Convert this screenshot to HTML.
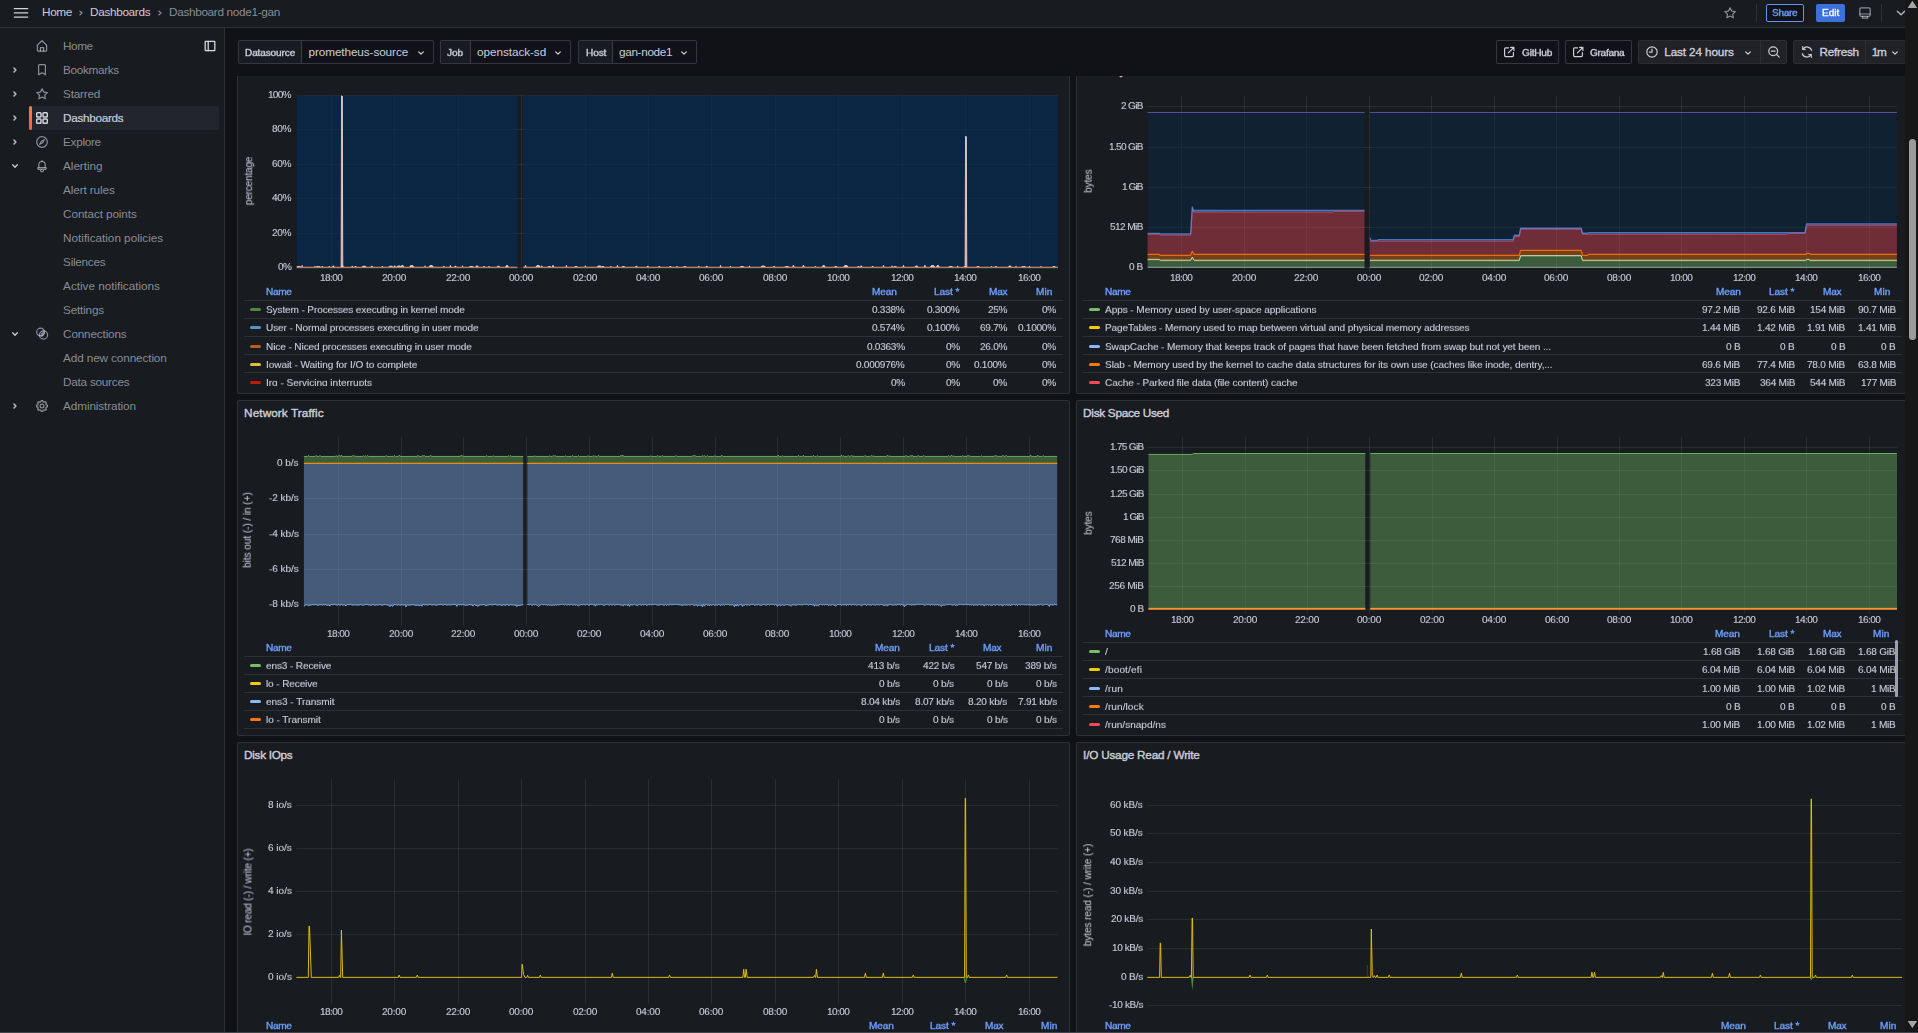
<!DOCTYPE html>
<html lang="en"><head><meta charset="utf-8"><title>Dashboard node1-gan - Dashboards - Grafana</title><style>
*{box-sizing:border-box}
html,body{margin:0;padding:0;background:#111217}
body{width:1918px;height:1033px;overflow:hidden;position:relative;font-family:"Liberation Sans",sans-serif;font-size:11.2px;color:#ccccdc}
.t{position:absolute;white-space:pre;line-height:1;font-family:"Liberation Sans",sans-serif}
.b{position:absolute}
.ic{position:absolute;overflow:visible}
.topbar{position:absolute;left:0;top:0;width:1918px;height:28px;background:#181b1f;border-bottom:1px solid rgba(204,204,220,0.12);z-index:5}
.side{position:absolute;left:0;top:28px;width:225px;height:1005px;background:#181b1f;border-right:1px solid rgba(204,204,220,0.12);z-index:4}
.toolbar{position:absolute;left:225px;top:28px;width:1693px;height:48px;background:#111217;z-index:3}
.grid{position:absolute;left:0;top:0;width:1918px;height:1033px;overflow:hidden}
.panel{position:absolute;background:#181b1f;border:1px solid rgba(204,204,220,0.12);border-radius:2px;overflow:hidden}
.panel>*{margin:-1px 0 0 -1px}
.plot{position:absolute;left:0;top:0}
.ax{position:absolute;left:0;top:0;width:0;height:0}
.lg{position:absolute;overflow:hidden}
.lg>*{margin:0}
.vscroll{position:absolute;left:1905px;top:0;width:15px;height:1033px;background:#171717;z-index:9;overflow:hidden}
.edge{position:absolute;left:0;top:1032px;width:1918px;height:1px;background:#41444b;z-index:10}
</style></head><body><main class="grid"><section class="panel" style="left:237px;top:58px;width:833px;height:336px"><span class="t" style="left:7.10px;top:7.30px;font-size:11.76px;color:#ccccdc;letter-spacing:-0.312px;-webkit-text-stroke:0.4px #ccccdc;">CPU Basic</span><svg class="plot" width="833" height="336" viewBox="0 0 833 336"><line x1="94.5" y1="37.4" x2="94.5" y2="213.3" stroke="rgba(240,250,255,0.08)" stroke-width="1"/><line x1="157.5" y1="37.4" x2="157.5" y2="213.3" stroke="rgba(240,250,255,0.08)" stroke-width="1"/><line x1="221.5" y1="37.4" x2="221.5" y2="213.3" stroke="rgba(240,250,255,0.08)" stroke-width="1"/><line x1="284.5" y1="37.4" x2="284.5" y2="213.3" stroke="rgba(240,250,255,0.08)" stroke-width="1"/><line x1="348.5" y1="37.4" x2="348.5" y2="213.3" stroke="rgba(240,250,255,0.08)" stroke-width="1"/><line x1="411.5" y1="37.4" x2="411.5" y2="213.3" stroke="rgba(240,250,255,0.08)" stroke-width="1"/><line x1="474.5" y1="37.4" x2="474.5" y2="213.3" stroke="rgba(240,250,255,0.08)" stroke-width="1"/><line x1="538.5" y1="37.4" x2="538.5" y2="213.3" stroke="rgba(240,250,255,0.08)" stroke-width="1"/><line x1="601.5" y1="37.4" x2="601.5" y2="213.3" stroke="rgba(240,250,255,0.08)" stroke-width="1"/><line x1="665.5" y1="37.4" x2="665.5" y2="213.3" stroke="rgba(240,250,255,0.08)" stroke-width="1"/><line x1="728.5" y1="37.4" x2="728.5" y2="213.3" stroke="rgba(240,250,255,0.08)" stroke-width="1"/><line x1="792.5" y1="37.4" x2="792.5" y2="213.3" stroke="rgba(240,250,255,0.08)" stroke-width="1"/><line x1="59.75" y1="37.5" x2="821" y2="37.5" stroke="rgba(240,250,255,0.08)" stroke-width="1"/><line x1="59.75" y1="71.5" x2="821" y2="71.5" stroke="rgba(240,250,255,0.08)" stroke-width="1"/><line x1="59.75" y1="106.5" x2="821" y2="106.5" stroke="rgba(240,250,255,0.08)" stroke-width="1"/><line x1="59.75" y1="140.5" x2="821" y2="140.5" stroke="rgba(240,250,255,0.08)" stroke-width="1"/><line x1="59.75" y1="175.5" x2="821" y2="175.5" stroke="rgba(240,250,255,0.08)" stroke-width="1"/><line x1="59.75" y1="209.5" x2="821" y2="209.5" stroke="rgba(240,250,255,0.08)" stroke-width="1"/><polygon points="59.75,37.4 280.5,37.4 280.5,210.2 59.75,210.2" fill="#052B51" fill-opacity="0.7"/><polyline points="59.75,210.05 280.5,210.05" fill="none" stroke="#508642" stroke-width="0.8" stroke-opacity="0.55" stroke-linejoin="round"/><polyline points="59.75,209.25 280.5,209.25" fill="none" stroke="#EE9275" stroke-width="1.2" stroke-opacity="1" stroke-linejoin="round"/><polygon points="59.12,208.9 60.68,207.9 62.76,207.9 64.32,208.9" fill="#FCE2DE" fill-opacity="0.85"/><polygon points="64.15,208.9 64.69,206.9 65.41,206.9 65.95,208.9" fill="#FCE2DE" fill-opacity="0.85"/><polygon points="64.35,209.8 65.05,208.4 65.75,209.8" fill="#E24D42" fill-opacity="0.85"/><polygon points="77.12,208.9 77.66,207.9 78.38,207.9 78.92,208.9" fill="#FCE2DE" fill-opacity="0.85"/><polygon points="77.32,209.8 78.02,208.4 78.72,209.8" fill="#508642" fill-opacity="0.85"/><polygon points="78.72,208.9 80.28,208.1 82.36,208.1 83.92,208.9" fill="#FCE2DE" fill-opacity="0.85"/><polygon points="80.62,209.8 81.32,208.4 82.02,209.8" fill="#E24D42" fill-opacity="0.85"/><polygon points="84.34,208.9 84.88,207.9 85.6,207.9 86.14,208.9" fill="#FCE2DE" fill-opacity="0.85"/><polygon points="91.4,208.9 91.94,207.9 92.66,207.9 93.2,208.9" fill="#FCE2DE" fill-opacity="0.85"/><polygon points="95.14,208.9 95.86,207.4 96.82,207.4 97.54,208.9" fill="#FCE2DE" fill-opacity="0.85"/><polygon points="104.2,208.9 104.92,206.9 105.88,206.9 106.6,208.9" fill="#FCE2DE" fill-opacity="0.85"/><polygon points="104.7,209.8 105.4,208.4 106.1,209.8" fill="#E24D42" fill-opacity="0.85"/><polygon points="114.35,208.9 114.89,207.7 115.61,207.7 116.15,208.9" fill="#FCE2DE" fill-opacity="0.85"/><polygon points="117.27,208.9 117.99,208.1 118.95,208.1 119.67,208.9" fill="#FCE2DE" fill-opacity="0.85"/><polygon points="124.49,208.9 126.05,207.7 128.13,207.7 129.69,208.9" fill="#FCE2DE" fill-opacity="0.85"/><polygon points="133.6,208.9 134.32,207.7 135.28,207.7 136,208.9" fill="#FCE2DE" fill-opacity="0.85"/><polygon points="144.44,208.9 144.98,207.9 145.7,207.9 146.24,208.9" fill="#FCE2DE" fill-opacity="0.85"/><polygon points="151.28,208.9 152.84,207.7 154.92,207.7 156.48,208.9" fill="#FCE2DE" fill-opacity="0.85"/><polygon points="153.18,209.8 153.88,208.4 154.58,209.8" fill="#E24D42" fill-opacity="0.85"/><polygon points="156.53,208.9 157.25,207.4 158.21,207.4 158.93,208.9" fill="#FCE2DE" fill-opacity="0.85"/><polygon points="159.38,208.9 160.94,207.4 163.02,207.4 164.58,208.9" fill="#FCE2DE" fill-opacity="0.85"/><polygon points="161.28,209.8 161.98,208.4 162.68,209.8" fill="#E24D42" fill-opacity="0.85"/><polygon points="163.57,208.9 164.65,206.9 166.09,206.9 167.17,208.9" fill="#FCE2DE" fill-opacity="0.85"/><polygon points="164.67,209.8 165.37,208.4 166.07,209.8" fill="#508642" fill-opacity="0.85"/><polygon points="172.11,208.9 173.67,206.9 175.75,206.9 177.31,208.9" fill="#FCE2DE" fill-opacity="0.85"/><polygon points="174.01,209.8 174.71,208.4 175.41,209.8" fill="#E24D42" fill-opacity="0.85"/><polygon points="187.17,208.9 187.71,207.4 188.43,207.4 188.97,208.9" fill="#FCE2DE" fill-opacity="0.85"/><polygon points="187.37,209.8 188.07,208.4 188.77,209.8" fill="#E24D42" fill-opacity="0.85"/><polygon points="191.53,208.9 193.09,206.9 195.17,206.9 196.73,208.9" fill="#FCE2DE" fill-opacity="0.85"/><polygon points="193.43,209.8 194.13,208.4 194.83,209.8" fill="#508642" fill-opacity="0.85"/><polygon points="205.93,208.9 206.47,207.7 207.19,207.7 207.73,208.9" fill="#FCE2DE" fill-opacity="0.85"/><polygon points="212.52,208.9 213.06,206.9 213.78,206.9 214.32,208.9" fill="#FCE2DE" fill-opacity="0.85"/><polygon points="217.23,208.9 217.95,207.7 218.91,207.7 219.63,208.9" fill="#FCE2DE" fill-opacity="0.85"/><polygon points="224.61,208.9 225.15,207.4 225.87,207.4 226.41,208.9" fill="#FCE2DE" fill-opacity="0.85"/><polygon points="224.81,209.8 225.51,208.4 226.21,209.8" fill="#508642" fill-opacity="0.85"/><polygon points="231.73,208.9 233.29,207.9 235.37,207.9 236.93,208.9" fill="#FCE2DE" fill-opacity="0.85"/><polygon points="238.23,208.9 239.31,207.4 240.75,207.4 241.83,208.9" fill="#FCE2DE" fill-opacity="0.85"/><polygon points="245.7,208.9 246.42,207.9 247.38,207.9 248.1,208.9" fill="#FCE2DE" fill-opacity="0.85"/><polygon points="246.2,209.8 246.9,208.4 247.6,209.8" fill="#E24D42" fill-opacity="0.85"/><polygon points="251.17,208.9 251.71,207.9 252.43,207.9 252.97,208.9" fill="#FCE2DE" fill-opacity="0.85"/><polygon points="259.55,208.9 260.63,207.7 262.07,207.7 263.15,208.9" fill="#FCE2DE" fill-opacity="0.85"/><polygon points="260.65,209.8 261.35,208.4 262.05,209.8" fill="#508642" fill-opacity="0.85"/><polygon points="268.19,208.9 269.27,206.9 270.71,206.9 271.79,208.9" fill="#FCE2DE" fill-opacity="0.85"/><polygon points="286,37.4 821,37.4 821,210.2 286,210.2" fill="#052B51" fill-opacity="0.7"/><polyline points="286,210.05 821,210.05" fill="none" stroke="#508642" stroke-width="0.8" stroke-opacity="0.55" stroke-linejoin="round"/><polyline points="286,209.25 821,209.25" fill="none" stroke="#EE9275" stroke-width="1.2" stroke-opacity="1" stroke-linejoin="round"/><polygon points="287.65,208.9 288.19,206.9 288.91,206.9 289.45,208.9" fill="#FCE2DE" fill-opacity="0.85"/><polygon points="298.46,208.9 300.02,206.9 302.1,206.9 303.66,208.9" fill="#FCE2DE" fill-opacity="0.85"/><polygon points="300.36,209.8 301.06,208.4 301.76,209.8" fill="#508642" fill-opacity="0.85"/><polygon points="303.85,208.9 304.39,207.4 305.11,207.4 305.65,208.9" fill="#FCE2DE" fill-opacity="0.85"/><polygon points="304.05,209.8 304.75,208.4 305.45,209.8" fill="#E24D42" fill-opacity="0.85"/><polygon points="310.52,208.9 311.6,208.1 313.04,208.1 314.12,208.9" fill="#FCE2DE" fill-opacity="0.85"/><polygon points="314.8,208.9 315.52,206.9 316.48,206.9 317.2,208.9" fill="#FCE2DE" fill-opacity="0.85"/><polygon points="328.51,208.9 329.05,206.9 329.77,206.9 330.31,208.9" fill="#FCE2DE" fill-opacity="0.85"/><polygon points="328.71,209.8 329.41,208.4 330.11,209.8" fill="#E24D42" fill-opacity="0.85"/><polygon points="337.17,208.9 338.25,207.9 339.69,207.9 340.77,208.9" fill="#FCE2DE" fill-opacity="0.85"/><polygon points="347.5,208.9 348.04,207.4 348.76,207.4 349.3,208.9" fill="#FCE2DE" fill-opacity="0.85"/><polygon points="347.7,209.8 348.4,208.4 349.1,209.8" fill="#508642" fill-opacity="0.85"/><polygon points="359.72,208.9 361.28,207.4 363.36,207.4 364.92,208.9" fill="#FCE2DE" fill-opacity="0.85"/><polygon points="364.01,208.9 365.09,208.1 366.53,208.1 367.61,208.9" fill="#FCE2DE" fill-opacity="0.85"/><polygon points="372.91,208.9 373.45,207.9 374.17,207.9 374.71,208.9" fill="#FCE2DE" fill-opacity="0.85"/><polygon points="373.11,209.8 373.81,208.4 374.51,209.8" fill="#E24D42" fill-opacity="0.85"/><polygon points="379.57,208.9 380.11,206.9 380.83,206.9 381.37,208.9" fill="#FCE2DE" fill-opacity="0.85"/><polygon points="384.6,208.9 385.68,208.1 387.12,208.1 388.2,208.9" fill="#FCE2DE" fill-opacity="0.85"/><polygon points="398.14,208.9 398.86,207.7 399.82,207.7 400.54,208.9" fill="#FCE2DE" fill-opacity="0.85"/><polygon points="409.6,208.9 410.32,207.7 411.28,207.7 412,208.9" fill="#FCE2DE" fill-opacity="0.85"/><polygon points="421.17,208.9 421.89,207.9 422.85,207.9 423.57,208.9" fill="#FCE2DE" fill-opacity="0.85"/><polygon points="432.18,208.9 432.9,207.9 433.86,207.9 434.58,208.9" fill="#FCE2DE" fill-opacity="0.85"/><polygon points="439.07,208.9 439.61,208.1 440.33,208.1 440.87,208.9" fill="#FCE2DE" fill-opacity="0.85"/><polygon points="446.1,208.9 447.18,207.9 448.62,207.9 449.7,208.9" fill="#FCE2DE" fill-opacity="0.85"/><polygon points="447.2,209.8 447.9,208.4 448.6,209.8" fill="#E24D42" fill-opacity="0.85"/><polygon points="460.86,208.9 461.4,207.7 462.12,207.7 462.66,208.9" fill="#FCE2DE" fill-opacity="0.85"/><polygon points="461.06,209.8 461.76,208.4 462.46,209.8" fill="#E24D42" fill-opacity="0.85"/><polygon points="468.47,208.9 469.19,207.7 470.15,207.7 470.87,208.9" fill="#FCE2DE" fill-opacity="0.85"/><polygon points="482.6,208.9 483.14,206.9 483.86,206.9 484.4,208.9" fill="#FCE2DE" fill-opacity="0.85"/><polygon points="492.61,208.9 493.15,208.1 493.87,208.1 494.41,208.9" fill="#FCE2DE" fill-opacity="0.85"/><polygon points="502.4,208.9 503.96,207.9 506.04,207.9 507.6,208.9" fill="#FCE2DE" fill-opacity="0.85"/><polygon points="511.59,208.9 512.13,207.7 512.85,207.7 513.39,208.9" fill="#FCE2DE" fill-opacity="0.85"/><polygon points="523.57,208.9 525.13,207.4 527.21,207.4 528.77,208.9" fill="#FCE2DE" fill-opacity="0.85"/><polygon points="525.47,209.8 526.17,208.4 526.87,209.8" fill="#E24D42" fill-opacity="0.85"/><polygon points="535.8,208.9 536.52,207.9 537.48,207.9 538.2,208.9" fill="#FCE2DE" fill-opacity="0.85"/><polygon points="536.3,209.8 537,208.4 537.7,209.8" fill="#E24D42" fill-opacity="0.85"/><polygon points="547.31,208.9 548.87,207.9 550.95,207.9 552.51,208.9" fill="#FCE2DE" fill-opacity="0.85"/><polygon points="555.24,208.9 555.96,206.9 556.92,206.9 557.64,208.9" fill="#FCE2DE" fill-opacity="0.85"/><polygon points="555.74,209.8 556.44,208.4 557.14,209.8" fill="#E24D42" fill-opacity="0.85"/><polygon points="565.21,208.9 565.93,206.9 566.89,206.9 567.61,208.9" fill="#FCE2DE" fill-opacity="0.85"/><polygon points="565.71,209.8 566.41,208.4 567.11,209.8" fill="#E24D42" fill-opacity="0.85"/><polygon points="577.51,208.9 578.05,207.9 578.77,207.9 579.31,208.9" fill="#FCE2DE" fill-opacity="0.85"/><polygon points="577.71,209.8 578.41,208.4 579.11,209.8" fill="#508642" fill-opacity="0.85"/><polygon points="584.87,208.9 585.95,206.9 587.39,206.9 588.47,208.9" fill="#FCE2DE" fill-opacity="0.85"/><polygon points="585.97,209.8 586.67,208.4 587.37,209.8" fill="#508642" fill-opacity="0.85"/><polygon points="596.97,208.9 598.05,208.1 599.49,208.1 600.57,208.9" fill="#FCE2DE" fill-opacity="0.85"/><polygon points="606.28,208.9 607.84,206.9 609.92,206.9 611.48,208.9" fill="#FCE2DE" fill-opacity="0.85"/><polygon points="620.28,208.9 621,207.9 621.96,207.9 622.68,208.9" fill="#FCE2DE" fill-opacity="0.85"/><polygon points="623,208.9 623.72,207.4 624.68,207.4 625.4,208.9" fill="#FCE2DE" fill-opacity="0.85"/><polygon points="634.42,208.9 635.14,207.9 636.1,207.9 636.82,208.9" fill="#FCE2DE" fill-opacity="0.85"/><polygon points="634.92,209.8 635.62,208.4 636.32,209.8" fill="#E24D42" fill-opacity="0.85"/><polygon points="645.56,208.9 646.1,206.9 646.82,206.9 647.36,208.9" fill="#FCE2DE" fill-opacity="0.85"/><polygon points="645.76,209.8 646.46,208.4 647.16,209.8" fill="#E24D42" fill-opacity="0.85"/><polygon points="654.17,208.9 654.71,207.4 655.43,207.4 655.97,208.9" fill="#FCE2DE" fill-opacity="0.85"/><polygon points="656.42,208.9 657.5,207.9 658.94,207.9 660.02,208.9" fill="#FCE2DE" fill-opacity="0.85"/><polygon points="657.52,209.8 658.22,208.4 658.92,209.8" fill="#E24D42" fill-opacity="0.85"/><polygon points="665.66,208.9 666.2,206.9 666.92,206.9 667.46,208.9" fill="#FCE2DE" fill-opacity="0.85"/><polygon points="677.75,208.9 678.83,207.4 680.27,207.4 681.35,208.9" fill="#FCE2DE" fill-opacity="0.85"/><polygon points="686.67,208.9 687.39,206.9 688.35,206.9 689.07,208.9" fill="#FCE2DE" fill-opacity="0.85"/><polygon points="692.97,208.9 694.53,206.9 696.61,206.9 698.17,208.9" fill="#FCE2DE" fill-opacity="0.85"/><polygon points="699.12,208.9 700.2,206.9 701.64,206.9 702.72,208.9" fill="#FCE2DE" fill-opacity="0.85"/><polygon points="711.08,208.9 712.64,207.9 714.72,207.9 716.28,208.9" fill="#FCE2DE" fill-opacity="0.85"/><polygon points="712.98,209.8 713.68,208.4 714.38,209.8" fill="#E24D42" fill-opacity="0.85"/><polygon points="719.8,208.9 720.34,207.7 721.06,207.7 721.6,208.9" fill="#FCE2DE" fill-opacity="0.85"/><polygon points="726.32,208.9 727.4,207.9 728.84,207.9 729.92,208.9" fill="#FCE2DE" fill-opacity="0.85"/><polygon points="739.14,208.9 740.22,207.9 741.66,207.9 742.74,208.9" fill="#FCE2DE" fill-opacity="0.85"/><polygon points="740.24,209.8 740.94,208.4 741.64,209.8" fill="#E24D42" fill-opacity="0.85"/><polygon points="753.66,208.9 754.2,207.9 754.92,207.9 755.46,208.9" fill="#FCE2DE" fill-opacity="0.85"/><polygon points="753.86,209.8 754.56,208.4 755.26,209.8" fill="#508642" fill-opacity="0.85"/><polygon points="757.74,208.9 758.46,207.9 759.42,207.9 760.14,208.9" fill="#FCE2DE" fill-opacity="0.85"/><polygon points="771.07,208.9 772.15,207.4 773.59,207.4 774.67,208.9" fill="#FCE2DE" fill-opacity="0.85"/><polygon points="772.17,209.8 772.87,208.4 773.57,209.8" fill="#508642" fill-opacity="0.85"/><polygon points="778.13,208.9 778.67,207.7 779.39,207.7 779.93,208.9" fill="#FCE2DE" fill-opacity="0.85"/><polygon points="778.33,209.8 779.03,208.4 779.73,209.8" fill="#508642" fill-opacity="0.85"/><polygon points="784,208.9 785.56,208.1 787.64,208.1 789.2,208.9" fill="#FCE2DE" fill-opacity="0.85"/><polygon points="785.9,209.8 786.6,208.4 787.3,209.8" fill="#E24D42" fill-opacity="0.85"/><polygon points="791.59,208.9 792.13,208.1 792.85,208.1 793.39,208.9" fill="#FCE2DE" fill-opacity="0.85"/><polygon points="803.16,208.9 803.7,208.1 804.42,208.1 804.96,208.9" fill="#FCE2DE" fill-opacity="0.85"/><polygon points="803.36,209.8 804.06,208.4 804.76,209.8" fill="#E24D42" fill-opacity="0.85"/><polygon points="815.18,208.9 816.26,207.9 817.7,207.9 818.78,208.9" fill="#FCE2DE" fill-opacity="0.85"/><polyline points="104,209.3 104.55,37.6 105,209.3" fill="none" stroke="#EA9A80" stroke-width="0.9" stroke-opacity="0.9" stroke-linejoin="round"/><polyline points="104.7,209 105.15,38.1 105.8,209" fill="none" stroke="#FCE2DE" stroke-width="0.9" stroke-opacity="0.9" stroke-linejoin="round"/><polyline points="728,209.3 728.55,78 729,209.3" fill="none" stroke="#EA9A80" stroke-width="0.9" stroke-opacity="0.9" stroke-linejoin="round"/><polyline points="728.7,209 729.15,78.5 729.8,209" fill="none" stroke="#FCE2DE" stroke-width="0.9" stroke-opacity="0.9" stroke-linejoin="round"/></svg><div class="ax"><span class="t" style="left:31.20px;top:31.73px;font-size:10.08px;color:#ccccdc;letter-spacing:-0.745px;will-change:transform;transform:scaleY(.875);transform-origin:0 8.27px;-webkit-text-stroke:0.12px #ccccdc;">100%</span><span class="t" style="left:35.00px;top:65.73px;font-size:10.08px;color:#ccccdc;letter-spacing:-0.391px;will-change:transform;transform:scaleY(.875);transform-origin:0 8.27px;-webkit-text-stroke:0.12px #ccccdc;">80%</span><span class="t" style="left:35.00px;top:100.73px;font-size:10.08px;color:#ccccdc;letter-spacing:-0.391px;will-change:transform;transform:scaleY(.875);transform-origin:0 8.27px;-webkit-text-stroke:0.12px #ccccdc;">60%</span><span class="t" style="left:35.00px;top:134.73px;font-size:10.08px;color:#ccccdc;letter-spacing:-0.391px;will-change:transform;transform:scaleY(.875);transform-origin:0 8.27px;-webkit-text-stroke:0.12px #ccccdc;">40%</span><span class="t" style="left:35.00px;top:169.73px;font-size:10.08px;color:#ccccdc;letter-spacing:-0.391px;will-change:transform;transform:scaleY(.875);transform-origin:0 8.27px;-webkit-text-stroke:0.12px #ccccdc;">20%</span><span class="t" style="left:40.60px;top:203.73px;font-size:10.08px;color:#ccccdc;letter-spacing:-0.589px;will-change:transform;transform:scaleY(.875);transform-origin:0 8.27px;-webkit-text-stroke:0.12px #ccccdc;">0%</span><span class="t" style="left:-12.35px;top:118.26px;font-size:10.08px;color:#ccccdc;transform:rotate(-90deg);transform-origin:50% 50%;will-change:transform;letter-spacing:-0.194px;">percentage</span><span class="t" style="left:82.90px;top:214.73px;font-size:10.08px;color:#ccccdc;letter-spacing:-0.567px;will-change:transform;transform:scaleY(.875);transform-origin:0 8.27px;-webkit-text-stroke:0.12px #ccccdc;">18:00</span><span class="t" style="left:145.10px;top:214.73px;font-size:10.08px;color:#ccccdc;letter-spacing:-0.247px;will-change:transform;transform:scaleY(.875);transform-origin:0 8.27px;-webkit-text-stroke:0.12px #ccccdc;">20:00</span><span class="t" style="left:209.10px;top:214.73px;font-size:10.08px;color:#ccccdc;letter-spacing:-0.247px;will-change:transform;transform:scaleY(.875);transform-origin:0 8.27px;-webkit-text-stroke:0.12px #ccccdc;">22:00</span><span class="t" style="left:272.10px;top:214.73px;font-size:10.08px;color:#ccccdc;letter-spacing:-0.247px;will-change:transform;transform:scaleY(.875);transform-origin:0 8.27px;-webkit-text-stroke:0.12px #ccccdc;">00:00</span><span class="t" style="left:336.10px;top:214.73px;font-size:10.08px;color:#ccccdc;letter-spacing:-0.247px;will-change:transform;transform:scaleY(.875);transform-origin:0 8.27px;-webkit-text-stroke:0.12px #ccccdc;">02:00</span><span class="t" style="left:399.10px;top:214.73px;font-size:10.08px;color:#ccccdc;letter-spacing:-0.247px;will-change:transform;transform:scaleY(.875);transform-origin:0 8.27px;-webkit-text-stroke:0.12px #ccccdc;">04:00</span><span class="t" style="left:462.10px;top:214.73px;font-size:10.08px;color:#ccccdc;letter-spacing:-0.247px;will-change:transform;transform:scaleY(.875);transform-origin:0 8.27px;-webkit-text-stroke:0.12px #ccccdc;">06:00</span><span class="t" style="left:526.10px;top:214.73px;font-size:10.08px;color:#ccccdc;letter-spacing:-0.247px;will-change:transform;transform:scaleY(.875);transform-origin:0 8.27px;-webkit-text-stroke:0.12px #ccccdc;">08:00</span><span class="t" style="left:589.90px;top:214.73px;font-size:10.08px;color:#ccccdc;letter-spacing:-0.567px;will-change:transform;transform:scaleY(.875);transform-origin:0 8.27px;-webkit-text-stroke:0.12px #ccccdc;">10:00</span><span class="t" style="left:653.90px;top:214.73px;font-size:10.08px;color:#ccccdc;letter-spacing:-0.567px;will-change:transform;transform:scaleY(.875);transform-origin:0 8.27px;-webkit-text-stroke:0.12px #ccccdc;">12:00</span><span class="t" style="left:716.90px;top:214.73px;font-size:10.08px;color:#ccccdc;letter-spacing:-0.567px;will-change:transform;transform:scaleY(.875);transform-origin:0 8.27px;-webkit-text-stroke:0.12px #ccccdc;">14:00</span><span class="t" style="left:780.90px;top:214.73px;font-size:10.08px;color:#ccccdc;letter-spacing:-0.567px;will-change:transform;transform:scaleY(.875);transform-origin:0 8.27px;-webkit-text-stroke:0.12px #ccccdc;">16:00</span></div><div class="lg" style="left:0;top:225px;width:833px;height:103.4px"><span class="t" style="left:29.40px;top:3.73px;font-size:10.08px;color:#6e9fff;letter-spacing:-0.323px;-webkit-text-stroke:0.4px #6e9fff;will-change:transform;transform:scaleY(.875);transform-origin:0 8.27px;">Name</span><span class="t" style="left:634.70px;top:3.73px;font-size:10.08px;color:#6e9fff;letter-spacing:-0.155px;-webkit-text-stroke:0.4px #6e9fff;will-change:transform;transform:scaleY(.875);transform-origin:0 8.27px;">Mean</span><span class="t" style="left:697.40px;top:3.73px;font-size:10.08px;color:#6e9fff;letter-spacing:-0.064px;-webkit-text-stroke:0.4px #6e9fff;will-change:transform;transform:scaleY(.875);transform-origin:0 8.27px;">Last *</span><span class="t" style="left:751.50px;top:3.73px;font-size:10.08px;color:#6e9fff;letter-spacing:-0.216px;-webkit-text-stroke:0.4px #6e9fff;will-change:transform;transform:scaleY(.875);transform-origin:0 8.27px;">Max</span><span class="t" style="left:798.60px;top:3.73px;font-size:10.08px;color:#6e9fff;letter-spacing:0.083px;-webkit-text-stroke:0.4px #6e9fff;will-change:transform;transform:scaleY(.875);transform-origin:0 8.27px;">Min</span><div class="b" style="left:7.00px;top:17.00px;width:819.00px;height:1.00px;background:rgba(204,204,220,0.12)"></div><div class="b" style="left:7.00px;top:35.00px;width:819.00px;height:1.00px;background:rgba(204,204,220,0.12)"></div><div class="b" style="left:7.00px;top:53.00px;width:819.00px;height:1.00px;background:rgba(204,204,220,0.12)"></div><div class="b" style="left:7.00px;top:71.00px;width:819.00px;height:1.00px;background:rgba(204,204,220,0.12)"></div><div class="b" style="left:7.00px;top:89.00px;width:819.00px;height:1.00px;background:rgba(204,204,220,0.12)"></div><div class="b" style="left:12.90px;top:24.60px;width:11.20px;height:3.30px;background:#508642;border-radius:1.6px"></div><span class="t" style="left:29.40px;top:21.73px;font-size:10.08px;color:#ccccdc;letter-spacing:-0.134px;will-change:transform;transform:scaleY(.875);transform-origin:0 8.27px;-webkit-text-stroke:0.12px #ccccdc;">System - Processes executing in kernel mode</span><span class="t" style="left:635.44px;top:21.73px;font-size:10.08px;color:#ccccdc;letter-spacing:-0.271px;will-change:transform;transform:scaleY(.875);transform-origin:0 8.27px;-webkit-text-stroke:0.12px #ccccdc;">0.338%</span><span class="t" style="left:690.24px;top:21.73px;font-size:10.08px;color:#ccccdc;letter-spacing:-0.271px;will-change:transform;transform:scaleY(.875);transform-origin:0 8.27px;-webkit-text-stroke:0.12px #ccccdc;">0.300%</span><span class="t" style="left:750.69px;top:21.73px;font-size:10.08px;color:#ccccdc;letter-spacing:-0.320px;will-change:transform;transform:scaleY(.875);transform-origin:0 8.27px;-webkit-text-stroke:0.12px #ccccdc;">25%</span><span class="t" style="left:805.22px;top:21.73px;font-size:10.08px;color:#ccccdc;letter-spacing:-0.347px;will-change:transform;transform:scaleY(.875);transform-origin:0 8.27px;-webkit-text-stroke:0.12px #ccccdc;">0%</span><div class="b" style="left:12.90px;top:42.60px;width:11.20px;height:3.30px;background:#5195CE;border-radius:1.6px"></div><span class="t" style="left:29.40px;top:39.73px;font-size:10.08px;color:#ccccdc;letter-spacing:-0.129px;will-change:transform;transform:scaleY(.875);transform-origin:0 8.27px;-webkit-text-stroke:0.12px #ccccdc;">User - Normal processes executing in user mode</span><span class="t" style="left:635.44px;top:39.73px;font-size:10.08px;color:#ccccdc;letter-spacing:-0.271px;will-change:transform;transform:scaleY(.875);transform-origin:0 8.27px;-webkit-text-stroke:0.12px #ccccdc;">0.574%</span><span class="t" style="left:690.24px;top:39.73px;font-size:10.08px;color:#ccccdc;letter-spacing:-0.271px;will-change:transform;transform:scaleY(.875);transform-origin:0 8.27px;-webkit-text-stroke:0.12px #ccccdc;">0.100%</span><span class="t" style="left:742.68px;top:39.73px;font-size:10.08px;color:#ccccdc;letter-spacing:-0.272px;will-change:transform;transform:scaleY(.875);transform-origin:0 8.27px;-webkit-text-stroke:0.12px #ccccdc;">69.7%</span><span class="t" style="left:781.20px;top:39.73px;font-size:10.08px;color:#ccccdc;letter-spacing:-0.271px;will-change:transform;transform:scaleY(.875);transform-origin:0 8.27px;-webkit-text-stroke:0.12px #ccccdc;">0.1000%</span><div class="b" style="left:12.90px;top:61.60px;width:11.20px;height:3.30px;background:#C15C17;border-radius:1.6px"></div><span class="t" style="left:29.40px;top:58.73px;font-size:10.08px;color:#ccccdc;letter-spacing:-0.109px;will-change:transform;transform:scaleY(.875);transform-origin:0 8.27px;-webkit-text-stroke:0.12px #ccccdc;">Nice - Niced processes executing in user mode</span><span class="t" style="left:630.10px;top:58.73px;font-size:10.08px;color:#ccccdc;letter-spacing:-0.271px;will-change:transform;transform:scaleY(.875);transform-origin:0 8.27px;-webkit-text-stroke:0.12px #ccccdc;">0.0363%</span><span class="t" style="left:708.92px;top:58.73px;font-size:10.08px;color:#ccccdc;letter-spacing:-0.347px;will-change:transform;transform:scaleY(.875);transform-origin:0 8.27px;-webkit-text-stroke:0.12px #ccccdc;">0%</span><span class="t" style="left:742.68px;top:58.73px;font-size:10.08px;color:#ccccdc;letter-spacing:-0.272px;will-change:transform;transform:scaleY(.875);transform-origin:0 8.27px;-webkit-text-stroke:0.12px #ccccdc;">26.0%</span><span class="t" style="left:805.22px;top:58.73px;font-size:10.08px;color:#ccccdc;letter-spacing:-0.347px;will-change:transform;transform:scaleY(.875);transform-origin:0 8.27px;-webkit-text-stroke:0.12px #ccccdc;">0%</span><div class="b" style="left:12.90px;top:79.60px;width:11.20px;height:3.30px;background:#EAB839;border-radius:1.6px"></div><span class="t" style="left:29.40px;top:76.73px;font-size:10.08px;color:#ccccdc;letter-spacing:-0.084px;will-change:transform;transform:scaleY(.875);transform-origin:0 8.27px;-webkit-text-stroke:0.12px #ccccdc;">Iowait - Waiting for I/O to complete</span><span class="t" style="left:619.43px;top:76.73px;font-size:10.08px;color:#ccccdc;letter-spacing:-0.270px;will-change:transform;transform:scaleY(.875);transform-origin:0 8.27px;-webkit-text-stroke:0.12px #ccccdc;">0.000976%</span><span class="t" style="left:708.92px;top:76.73px;font-size:10.08px;color:#ccccdc;letter-spacing:-0.347px;will-change:transform;transform:scaleY(.875);transform-origin:0 8.27px;-webkit-text-stroke:0.12px #ccccdc;">0%</span><span class="t" style="left:737.34px;top:76.73px;font-size:10.08px;color:#ccccdc;letter-spacing:-0.271px;will-change:transform;transform:scaleY(.875);transform-origin:0 8.27px;-webkit-text-stroke:0.12px #ccccdc;">0.100%</span><span class="t" style="left:805.22px;top:76.73px;font-size:10.08px;color:#ccccdc;letter-spacing:-0.347px;will-change:transform;transform:scaleY(.875);transform-origin:0 8.27px;-webkit-text-stroke:0.12px #ccccdc;">0%</span><div class="b" style="left:12.90px;top:97.60px;width:11.20px;height:3.30px;background:#BF1B00;border-radius:1.6px"></div><span class="t" style="left:29.40px;top:94.73px;font-size:10.08px;color:#ccccdc;letter-spacing:-0.038px;will-change:transform;transform:scaleY(.875);transform-origin:0 8.27px;-webkit-text-stroke:0.12px #ccccdc;">Irq - Servicing interrupts</span><span class="t" style="left:654.12px;top:94.73px;font-size:10.08px;color:#ccccdc;letter-spacing:-0.347px;will-change:transform;transform:scaleY(.875);transform-origin:0 8.27px;-webkit-text-stroke:0.12px #ccccdc;">0%</span><span class="t" style="left:708.92px;top:94.73px;font-size:10.08px;color:#ccccdc;letter-spacing:-0.347px;will-change:transform;transform:scaleY(.875);transform-origin:0 8.27px;-webkit-text-stroke:0.12px #ccccdc;">0%</span><span class="t" style="left:756.02px;top:94.73px;font-size:10.08px;color:#ccccdc;letter-spacing:-0.347px;will-change:transform;transform:scaleY(.875);transform-origin:0 8.27px;-webkit-text-stroke:0.12px #ccccdc;">0%</span><span class="t" style="left:805.22px;top:94.73px;font-size:10.08px;color:#ccccdc;letter-spacing:-0.347px;will-change:transform;transform:scaleY(.875);transform-origin:0 8.27px;-webkit-text-stroke:0.12px #ccccdc;">0%</span></div></section><section class="panel" style="left:1076px;top:58px;width:833px;height:336px"><span class="t" style="left:7.10px;top:7.30px;font-size:11.76px;color:#ccccdc;letter-spacing:-0.036px;-webkit-text-stroke:0.4px #ccccdc;">Memory Basic</span><svg class="plot" width="833" height="336" viewBox="0 0 833 336"><line x1="105.5" y1="37.4" x2="105.5" y2="213.3" stroke="rgba(240,250,255,0.08)" stroke-width="1"/><line x1="168.5" y1="37.4" x2="168.5" y2="213.3" stroke="rgba(240,250,255,0.08)" stroke-width="1"/><line x1="230.5" y1="37.4" x2="230.5" y2="213.3" stroke="rgba(240,250,255,0.08)" stroke-width="1"/><line x1="293.5" y1="37.4" x2="293.5" y2="213.3" stroke="rgba(240,250,255,0.08)" stroke-width="1"/><line x1="355.5" y1="37.4" x2="355.5" y2="213.3" stroke="rgba(240,250,255,0.08)" stroke-width="1"/><line x1="418.5" y1="37.4" x2="418.5" y2="213.3" stroke="rgba(240,250,255,0.08)" stroke-width="1"/><line x1="480.5" y1="37.4" x2="480.5" y2="213.3" stroke="rgba(240,250,255,0.08)" stroke-width="1"/><line x1="543.5" y1="37.4" x2="543.5" y2="213.3" stroke="rgba(240,250,255,0.08)" stroke-width="1"/><line x1="605.5" y1="37.4" x2="605.5" y2="213.3" stroke="rgba(240,250,255,0.08)" stroke-width="1"/><line x1="668.5" y1="37.4" x2="668.5" y2="213.3" stroke="rgba(240,250,255,0.08)" stroke-width="1"/><line x1="730.5" y1="37.4" x2="730.5" y2="213.3" stroke="rgba(240,250,255,0.08)" stroke-width="1"/><line x1="793.5" y1="37.4" x2="793.5" y2="213.3" stroke="rgba(240,250,255,0.08)" stroke-width="1"/><line x1="71.6" y1="48.5" x2="820.9" y2="48.5" stroke="rgba(240,250,255,0.08)" stroke-width="1"/><line x1="71.6" y1="89.5" x2="820.9" y2="89.5" stroke="rgba(240,250,255,0.08)" stroke-width="1"/><line x1="71.6" y1="129.5" x2="820.9" y2="129.5" stroke="rgba(240,250,255,0.08)" stroke-width="1"/><line x1="71.6" y1="169.5" x2="820.9" y2="169.5" stroke="rgba(240,250,255,0.08)" stroke-width="1"/><line x1="71.6" y1="209.5" x2="820.9" y2="209.5" stroke="rgba(240,250,255,0.08)" stroke-width="1"/><polygon points="71.6,54.5 288.5,54.5 288.5,152.4 117.4,152.5 116.3,149 114.6,175.9 84.2,175.9 83.2,175.3 71.6,175.3" fill="#052B51" fill-opacity="0.4"/><polygon points="71.6,175.3 83.2,175.3 84.2,175.9 114.6,175.9 116.3,149 117.4,152.5 288.5,152.4 288.5,153.5 258.2,153.5 257.2,154.3 117.7,154.3 116.4,150.6 114.7,177.25 84.2,177.25 83.2,176.4 71.6,176.4" fill="#5794F2" fill-opacity="0.4"/><polygon points="71.6,176.4 83.2,176.4 84.2,177.25 114.7,177.25 116.4,150.6 117.7,154.3 257.2,154.3 258.2,153.5 288.5,153.5 288.5,196.3 118,196.3 116.3,193.2 114.4,197.4 84.2,197.4 83.2,196.3 71.6,196.3" fill="#F2495C" fill-opacity="0.4"/><polygon points="71.6,196.3 83.2,196.3 84.2,197.4 114.4,197.4 116.3,193.2 118,196.3 288.5,196.3 288.5,202.25 118.2,202.25 116.3,199.1 114.6,202.2 84.2,202.2 83.2,201.3 71.6,201.3" fill="#FF780A" fill-opacity="0.4"/><polygon points="71.6,201.3 83.2,201.3 84.2,202.2 114.6,202.2 116.3,199.1 118.2,202.25 288.5,202.25 288.5,209.6 71.6,209.6" fill="#73BF69" fill-opacity="0.4"/><polyline points="71.6,209.3 288.5,209.3" fill="none" stroke="#9DB8C4" stroke-width="1.0" stroke-opacity="0.8" stroke-linejoin="round"/><polyline points="71.6,201.8 83.2,201.8 84.2,202.7 114.6,202.7 116.3,199.6 118.2,202.75 288.5,202.75" fill="none" stroke="#73BF69" stroke-width="0.8" stroke-opacity="0.7" stroke-linejoin="round"/><polyline points="71.6,201.3 83.2,201.3 84.2,202.2 114.6,202.2 116.3,199.1 118.2,202.25 288.5,202.25" fill="none" stroke="#DDD6BC" stroke-width="1.0" stroke-opacity="0.92" stroke-linejoin="round"/><polyline points="71.6,196.3 83.2,196.3 84.2,197.4 114.4,197.4 116.3,193.2 118,196.3 288.5,196.3" fill="none" stroke="#FF780A" stroke-width="1.2" stroke-opacity="0.85" stroke-linejoin="round"/><polyline points="71.6,176.4 83.2,176.4 84.2,177.25 114.7,177.25 116.4,150.6 117.7,154.3 257.2,154.3 258.2,153.5 288.5,153.5" fill="none" stroke="#F2495C" stroke-width="1.0" stroke-opacity="0.62" stroke-linejoin="round"/><polyline points="71.6,175.3 83.2,175.3 84.2,175.9 114.6,175.9 116.3,149 117.4,152.5 288.5,152.4" fill="none" stroke="#5794F2" stroke-width="1.3" stroke-opacity="0.72" stroke-linejoin="round"/><polyline points="71.6,54.5 288.5,54.5" fill="none" stroke="#5A4F96" stroke-width="1.0" stroke-opacity="1" stroke-linejoin="round"/><polygon points="294,54.5 820.9,54.5 820.9,165.9 730.5,165.9 729,174.7 512.3,174.7 511.3,175.25 506.5,175.25 505.2,170.25 444.6,170.25 443.3,177.25 438.4,177.25 436.9,181.7 302.2,181.7 301.2,182.4 294.8,182.4 294,179.6" fill="#052B51" fill-opacity="0.4"/><polygon points="294,179.6 294.8,182.4 301.2,182.4 302.2,181.7 436.9,181.7 438.4,177.25 443.3,177.25 444.6,170.25 505.2,170.25 506.5,175.25 511.3,175.25 512.3,174.7 729,174.7 730.5,165.9 820.9,165.9 820.9,167.6 730.6,167.6 729,175.5 712.3,175.5 711.3,176.5 506.5,176.4 505.2,171.4 444.6,171.4 443.3,178.5 438.4,178.5 436.9,183.4 294,183.4" fill="#5794F2" fill-opacity="0.4"/><polygon points="294,183.4 436.9,183.4 438.4,178.5 443.3,178.5 444.6,171.4 505.2,171.4 506.5,176.4 711.3,176.5 712.3,175.5 729,175.5 730.6,167.6 820.9,167.6 820.9,196.3 734.6,196.3 733.4,195.4 730.8,195.4 729.6,196.3 512.3,196.3 511.3,197.4 506.5,197.4 505.2,192.4 444.6,192.4 443.3,197.4 294,197.4" fill="#F2495C" fill-opacity="0.4"/><polygon points="294,197.4 443.3,197.4 444.6,192.4 505.2,192.4 506.5,197.4 511.3,197.4 512.3,196.3 729.6,196.3 730.8,195.4 733.4,195.4 734.6,196.3 820.9,196.3 820.9,202.25 734,202.25 732.8,201.3 730.8,201.3 729.6,202.25 506.5,202.25 505.2,197.6 444.6,197.6 443.3,202.25 294,202.25" fill="#FF780A" fill-opacity="0.4"/><polygon points="294,202.25 443.3,202.25 444.6,197.6 505.2,197.6 506.5,202.25 729.6,202.25 730.8,201.3 732.8,201.3 734,202.25 820.9,202.25 820.9,209.6 294,209.6" fill="#73BF69" fill-opacity="0.4"/><polyline points="294,209.3 820.9,209.3" fill="none" stroke="#9DB8C4" stroke-width="1.0" stroke-opacity="0.8" stroke-linejoin="round"/><polyline points="294,202.75 443.3,202.75 444.6,198.1 505.2,198.1 506.5,202.75 729.6,202.75 730.8,201.8 732.8,201.8 734,202.75 820.9,202.75" fill="none" stroke="#73BF69" stroke-width="0.8" stroke-opacity="0.7" stroke-linejoin="round"/><polyline points="294,202.25 443.3,202.25 444.6,197.6 505.2,197.6 506.5,202.25 729.6,202.25 730.8,201.3 732.8,201.3 734,202.25 820.9,202.25" fill="none" stroke="#DDD6BC" stroke-width="1.0" stroke-opacity="0.92" stroke-linejoin="round"/><polyline points="294,197.4 443.3,197.4 444.6,192.4 505.2,192.4 506.5,197.4 511.3,197.4 512.3,196.3 729.6,196.3 730.8,195.4 733.4,195.4 734.6,196.3 820.9,196.3" fill="none" stroke="#FF780A" stroke-width="1.2" stroke-opacity="0.85" stroke-linejoin="round"/><polyline points="294,183.4 436.9,183.4 438.4,178.5 443.3,178.5 444.6,171.4 505.2,171.4 506.5,176.4 711.3,176.5 712.3,175.5 729,175.5 730.6,167.6 820.9,167.6" fill="none" stroke="#F2495C" stroke-width="1.0" stroke-opacity="0.62" stroke-linejoin="round"/><polyline points="294,179.6 294.8,182.4 301.2,182.4 302.2,181.7 436.9,181.7 438.4,177.25 443.3,177.25 444.6,170.25 505.2,170.25 506.5,175.25 511.3,175.25 512.3,174.7 729,174.7 730.5,165.9 820.9,165.9" fill="none" stroke="#5794F2" stroke-width="1.3" stroke-opacity="0.72" stroke-linejoin="round"/><polyline points="294,54.5 820.9,54.5" fill="none" stroke="#5A4F96" stroke-width="1.0" stroke-opacity="1" stroke-linejoin="round"/></svg><div class="ax"><span class="t" style="left:44.80px;top:42.73px;font-size:10.08px;color:#ccccdc;letter-spacing:-0.684px;will-change:transform;transform:scaleY(.875);transform-origin:0 8.27px;-webkit-text-stroke:0.12px #ccccdc;">2 GiB</span><span class="t" style="left:32.80px;top:83.73px;font-size:10.08px;color:#ccccdc;letter-spacing:-0.677px;will-change:transform;transform:scaleY(.875);transform-origin:0 8.27px;-webkit-text-stroke:0.12px #ccccdc;">1.50 GiB</span><span class="t" style="left:46.00px;top:123.73px;font-size:10.08px;color:#ccccdc;letter-spacing:-0.924px;will-change:transform;transform:scaleY(.875);transform-origin:0 8.27px;-webkit-text-stroke:0.12px #ccccdc;">1 GiB</span><span class="t" style="left:33.80px;top:163.73px;font-size:10.08px;color:#ccccdc;letter-spacing:-0.598px;will-change:transform;transform:scaleY(.875);transform-origin:0 8.27px;-webkit-text-stroke:0.12px #ccccdc;">512 MiB</span><span class="t" style="left:53.00px;top:203.73px;font-size:10.08px;color:#ccccdc;letter-spacing:-0.514px;will-change:transform;transform:scaleY(.875);transform-origin:0 8.27px;-webkit-text-stroke:0.12px #ccccdc;">0 B</span><span class="t" style="left:0.85px;top:118.26px;font-size:10.08px;color:#ccccdc;transform:rotate(-90deg);transform-origin:50% 50%;will-change:transform;letter-spacing:-0.119px;">bytes</span><span class="t" style="left:93.90px;top:214.73px;font-size:10.08px;color:#ccccdc;letter-spacing:-0.567px;will-change:transform;transform:scaleY(.875);transform-origin:0 8.27px;-webkit-text-stroke:0.12px #ccccdc;">18:00</span><span class="t" style="left:156.10px;top:214.73px;font-size:10.08px;color:#ccccdc;letter-spacing:-0.247px;will-change:transform;transform:scaleY(.875);transform-origin:0 8.27px;-webkit-text-stroke:0.12px #ccccdc;">20:00</span><span class="t" style="left:218.10px;top:214.73px;font-size:10.08px;color:#ccccdc;letter-spacing:-0.247px;will-change:transform;transform:scaleY(.875);transform-origin:0 8.27px;-webkit-text-stroke:0.12px #ccccdc;">22:00</span><span class="t" style="left:281.10px;top:214.73px;font-size:10.08px;color:#ccccdc;letter-spacing:-0.247px;will-change:transform;transform:scaleY(.875);transform-origin:0 8.27px;-webkit-text-stroke:0.12px #ccccdc;">00:00</span><span class="t" style="left:343.10px;top:214.73px;font-size:10.08px;color:#ccccdc;letter-spacing:-0.247px;will-change:transform;transform:scaleY(.875);transform-origin:0 8.27px;-webkit-text-stroke:0.12px #ccccdc;">02:00</span><span class="t" style="left:406.10px;top:214.73px;font-size:10.08px;color:#ccccdc;letter-spacing:-0.247px;will-change:transform;transform:scaleY(.875);transform-origin:0 8.27px;-webkit-text-stroke:0.12px #ccccdc;">04:00</span><span class="t" style="left:468.10px;top:214.73px;font-size:10.08px;color:#ccccdc;letter-spacing:-0.247px;will-change:transform;transform:scaleY(.875);transform-origin:0 8.27px;-webkit-text-stroke:0.12px #ccccdc;">06:00</span><span class="t" style="left:531.10px;top:214.73px;font-size:10.08px;color:#ccccdc;letter-spacing:-0.247px;will-change:transform;transform:scaleY(.875);transform-origin:0 8.27px;-webkit-text-stroke:0.12px #ccccdc;">08:00</span><span class="t" style="left:593.90px;top:214.73px;font-size:10.08px;color:#ccccdc;letter-spacing:-0.567px;will-change:transform;transform:scaleY(.875);transform-origin:0 8.27px;-webkit-text-stroke:0.12px #ccccdc;">10:00</span><span class="t" style="left:656.90px;top:214.73px;font-size:10.08px;color:#ccccdc;letter-spacing:-0.567px;will-change:transform;transform:scaleY(.875);transform-origin:0 8.27px;-webkit-text-stroke:0.12px #ccccdc;">12:00</span><span class="t" style="left:718.90px;top:214.73px;font-size:10.08px;color:#ccccdc;letter-spacing:-0.567px;will-change:transform;transform:scaleY(.875);transform-origin:0 8.27px;-webkit-text-stroke:0.12px #ccccdc;">14:00</span><span class="t" style="left:781.90px;top:214.73px;font-size:10.08px;color:#ccccdc;letter-spacing:-0.567px;will-change:transform;transform:scaleY(.875);transform-origin:0 8.27px;-webkit-text-stroke:0.12px #ccccdc;">16:00</span></div><div class="lg" style="left:0;top:225px;width:833px;height:109.0px"><span class="t" style="left:29.40px;top:3.73px;font-size:10.08px;color:#6e9fff;letter-spacing:-0.323px;-webkit-text-stroke:0.4px #6e9fff;will-change:transform;transform:scaleY(.875);transform-origin:0 8.27px;">Name</span><span class="t" style="left:639.50px;top:3.73px;font-size:10.08px;color:#6e9fff;letter-spacing:-0.155px;-webkit-text-stroke:0.4px #6e9fff;will-change:transform;transform:scaleY(.875);transform-origin:0 8.27px;">Mean</span><span class="t" style="left:693.10px;top:3.73px;font-size:10.08px;color:#6e9fff;letter-spacing:-0.064px;-webkit-text-stroke:0.4px #6e9fff;will-change:transform;transform:scaleY(.875);transform-origin:0 8.27px;">Last *</span><span class="t" style="left:747.40px;top:3.73px;font-size:10.08px;color:#6e9fff;letter-spacing:-0.216px;-webkit-text-stroke:0.4px #6e9fff;will-change:transform;transform:scaleY(.875);transform-origin:0 8.27px;">Max</span><span class="t" style="left:797.60px;top:3.73px;font-size:10.08px;color:#6e9fff;letter-spacing:0.083px;-webkit-text-stroke:0.4px #6e9fff;will-change:transform;transform:scaleY(.875);transform-origin:0 8.27px;">Min</span><div class="b" style="left:7.00px;top:17.00px;width:819.00px;height:1.00px;background:rgba(204,204,220,0.12)"></div><div class="b" style="left:7.00px;top:35.00px;width:819.00px;height:1.00px;background:rgba(204,204,220,0.12)"></div><div class="b" style="left:7.00px;top:53.00px;width:819.00px;height:1.00px;background:rgba(204,204,220,0.12)"></div><div class="b" style="left:7.00px;top:71.00px;width:819.00px;height:1.00px;background:rgba(204,204,220,0.12)"></div><div class="b" style="left:7.00px;top:89.00px;width:819.00px;height:1.00px;background:rgba(204,204,220,0.12)"></div><div class="b" style="left:12.90px;top:24.60px;width:11.20px;height:3.30px;background:#73BF69;border-radius:1.6px"></div><span class="t" style="left:29.40px;top:21.73px;font-size:10.08px;color:#ccccdc;letter-spacing:-0.080px;will-change:transform;transform:scaleY(.875);transform-origin:0 8.27px;-webkit-text-stroke:0.12px #ccccdc;">Apps - Memory used by user-space applications</span><span class="t" style="left:626.31px;top:21.73px;font-size:10.08px;color:#ccccdc;letter-spacing:-0.237px;will-change:transform;transform:scaleY(.875);transform-origin:0 8.27px;-webkit-text-stroke:0.12px #ccccdc;">97.2 MiB</span><span class="t" style="left:681.01px;top:21.73px;font-size:10.08px;color:#ccccdc;letter-spacing:-0.237px;will-change:transform;transform:scaleY(.875);transform-origin:0 8.27px;-webkit-text-stroke:0.12px #ccccdc;">92.6 MiB</span><span class="t" style="left:733.78px;top:21.73px;font-size:10.08px;color:#ccccdc;letter-spacing:-0.252px;will-change:transform;transform:scaleY(.875);transform-origin:0 8.27px;-webkit-text-stroke:0.12px #ccccdc;">154 MiB</span><span class="t" style="left:781.91px;top:21.73px;font-size:10.08px;color:#ccccdc;letter-spacing:-0.237px;will-change:transform;transform:scaleY(.875);transform-origin:0 8.27px;-webkit-text-stroke:0.12px #ccccdc;">90.7 MiB</span><div class="b" style="left:12.90px;top:42.60px;width:11.20px;height:3.30px;background:#F2CC0C;border-radius:1.6px"></div><span class="t" style="left:29.40px;top:39.73px;font-size:10.08px;color:#ccccdc;letter-spacing:-0.126px;will-change:transform;transform:scaleY(.875);transform-origin:0 8.27px;-webkit-text-stroke:0.12px #ccccdc;">PageTables - Memory used to map between virtual and physical memory addresses</span><span class="t" style="left:626.31px;top:39.73px;font-size:10.08px;color:#ccccdc;letter-spacing:-0.237px;will-change:transform;transform:scaleY(.875);transform-origin:0 8.27px;-webkit-text-stroke:0.12px #ccccdc;">1.44 MiB</span><span class="t" style="left:681.01px;top:39.73px;font-size:10.08px;color:#ccccdc;letter-spacing:-0.237px;will-change:transform;transform:scaleY(.875);transform-origin:0 8.27px;-webkit-text-stroke:0.12px #ccccdc;">1.42 MiB</span><span class="t" style="left:731.11px;top:39.73px;font-size:10.08px;color:#ccccdc;letter-spacing:-0.237px;will-change:transform;transform:scaleY(.875);transform-origin:0 8.27px;-webkit-text-stroke:0.12px #ccccdc;">1.91 MiB</span><span class="t" style="left:781.91px;top:39.73px;font-size:10.08px;color:#ccccdc;letter-spacing:-0.237px;will-change:transform;transform:scaleY(.875);transform-origin:0 8.27px;-webkit-text-stroke:0.12px #ccccdc;">1.41 MiB</span><div class="b" style="left:12.90px;top:61.60px;width:11.20px;height:3.30px;background:#8AB8FF;border-radius:1.6px"></div><span class="t" style="left:29.40px;top:58.73px;font-size:10.08px;color:#ccccdc;letter-spacing:-0.102px;will-change:transform;transform:scaleY(.875);transform-origin:0 8.27px;-webkit-text-stroke:0.12px #ccccdc;">SwapCache - Memory that keeps track of pages that have been fetched from swap but not yet been ...</span><span class="t" style="left:649.78px;top:58.73px;font-size:10.08px;color:#ccccdc;letter-spacing:-0.240px;will-change:transform;transform:scaleY(.875);transform-origin:0 8.27px;-webkit-text-stroke:0.12px #ccccdc;">0 B</span><span class="t" style="left:704.48px;top:58.73px;font-size:10.08px;color:#ccccdc;letter-spacing:-0.240px;will-change:transform;transform:scaleY(.875);transform-origin:0 8.27px;-webkit-text-stroke:0.12px #ccccdc;">0 B</span><span class="t" style="left:754.58px;top:58.73px;font-size:10.08px;color:#ccccdc;letter-spacing:-0.240px;will-change:transform;transform:scaleY(.875);transform-origin:0 8.27px;-webkit-text-stroke:0.12px #ccccdc;">0 B</span><span class="t" style="left:805.38px;top:58.73px;font-size:10.08px;color:#ccccdc;letter-spacing:-0.240px;will-change:transform;transform:scaleY(.875);transform-origin:0 8.27px;-webkit-text-stroke:0.12px #ccccdc;">0 B</span><div class="b" style="left:12.90px;top:79.60px;width:11.20px;height:3.30px;background:#FF780A;border-radius:1.6px"></div><span class="t" style="left:29.40px;top:76.73px;font-size:10.08px;color:#ccccdc;letter-spacing:-0.085px;will-change:transform;transform:scaleY(.875);transform-origin:0 8.27px;-webkit-text-stroke:0.12px #ccccdc;">Slab - Memory used by the kernel to cache data structures for its own use (caches like inode, dentry,...</span><span class="t" style="left:626.31px;top:76.73px;font-size:10.08px;color:#ccccdc;letter-spacing:-0.237px;will-change:transform;transform:scaleY(.875);transform-origin:0 8.27px;-webkit-text-stroke:0.12px #ccccdc;">69.6 MiB</span><span class="t" style="left:681.01px;top:76.73px;font-size:10.08px;color:#ccccdc;letter-spacing:-0.237px;will-change:transform;transform:scaleY(.875);transform-origin:0 8.27px;-webkit-text-stroke:0.12px #ccccdc;">77.4 MiB</span><span class="t" style="left:731.11px;top:76.73px;font-size:10.08px;color:#ccccdc;letter-spacing:-0.237px;will-change:transform;transform:scaleY(.875);transform-origin:0 8.27px;-webkit-text-stroke:0.12px #ccccdc;">78.0 MiB</span><span class="t" style="left:781.91px;top:76.73px;font-size:10.08px;color:#ccccdc;letter-spacing:-0.237px;will-change:transform;transform:scaleY(.875);transform-origin:0 8.27px;-webkit-text-stroke:0.12px #ccccdc;">63.8 MiB</span><div class="b" style="left:12.90px;top:97.60px;width:11.20px;height:3.30px;background:#F2495C;border-radius:1.6px"></div><span class="t" style="left:29.40px;top:94.73px;font-size:10.08px;color:#ccccdc;letter-spacing:-0.080px;will-change:transform;transform:scaleY(.875);transform-origin:0 8.27px;-webkit-text-stroke:0.12px #ccccdc;">Cache - Parked file data (file content) cache</span><span class="t" style="left:628.98px;top:94.73px;font-size:10.08px;color:#ccccdc;letter-spacing:-0.252px;will-change:transform;transform:scaleY(.875);transform-origin:0 8.27px;-webkit-text-stroke:0.12px #ccccdc;">323 MiB</span><span class="t" style="left:683.68px;top:94.73px;font-size:10.08px;color:#ccccdc;letter-spacing:-0.252px;will-change:transform;transform:scaleY(.875);transform-origin:0 8.27px;-webkit-text-stroke:0.12px #ccccdc;">364 MiB</span><span class="t" style="left:733.78px;top:94.73px;font-size:10.08px;color:#ccccdc;letter-spacing:-0.252px;will-change:transform;transform:scaleY(.875);transform-origin:0 8.27px;-webkit-text-stroke:0.12px #ccccdc;">544 MiB</span><span class="t" style="left:784.58px;top:94.73px;font-size:10.08px;color:#ccccdc;letter-spacing:-0.252px;will-change:transform;transform:scaleY(.875);transform-origin:0 8.27px;-webkit-text-stroke:0.12px #ccccdc;">177 MiB</span></div></section><section class="panel" style="left:237px;top:400px;width:833px;height:336px"><span class="t" style="left:7.10px;top:7.30px;font-size:11.76px;color:#ccccdc;letter-spacing:0.091px;-webkit-text-stroke:0.4px #ccccdc;">Network Traffic</span><svg class="plot" width="833" height="336" viewBox="0 0 833 336"><line x1="101.5" y1="37.1" x2="101.5" y2="225.6" stroke="rgba(240,250,255,0.08)" stroke-width="1"/><line x1="164.5" y1="37.1" x2="164.5" y2="225.6" stroke="rgba(240,250,255,0.08)" stroke-width="1"/><line x1="226.5" y1="37.1" x2="226.5" y2="225.6" stroke="rgba(240,250,255,0.08)" stroke-width="1"/><line x1="289.5" y1="37.1" x2="289.5" y2="225.6" stroke="rgba(240,250,255,0.08)" stroke-width="1"/><line x1="352.5" y1="37.1" x2="352.5" y2="225.6" stroke="rgba(240,250,255,0.08)" stroke-width="1"/><line x1="415.5" y1="37.1" x2="415.5" y2="225.6" stroke="rgba(240,250,255,0.08)" stroke-width="1"/><line x1="478.5" y1="37.1" x2="478.5" y2="225.6" stroke="rgba(240,250,255,0.08)" stroke-width="1"/><line x1="540.5" y1="37.1" x2="540.5" y2="225.6" stroke="rgba(240,250,255,0.08)" stroke-width="1"/><line x1="603.5" y1="37.1" x2="603.5" y2="225.6" stroke="rgba(240,250,255,0.08)" stroke-width="1"/><line x1="666.5" y1="37.1" x2="666.5" y2="225.6" stroke="rgba(240,250,255,0.08)" stroke-width="1"/><line x1="729.5" y1="37.1" x2="729.5" y2="225.6" stroke="rgba(240,250,255,0.08)" stroke-width="1"/><line x1="792.5" y1="37.1" x2="792.5" y2="225.6" stroke="rgba(240,250,255,0.08)" stroke-width="1"/><line x1="66.9" y1="63.5" x2="820.2" y2="63.5" stroke="rgba(240,250,255,0.08)" stroke-width="1"/><line x1="66.9" y1="98.5" x2="820.2" y2="98.5" stroke="rgba(240,250,255,0.08)" stroke-width="1"/><line x1="66.9" y1="134.5" x2="820.2" y2="134.5" stroke="rgba(240,250,255,0.08)" stroke-width="1"/><line x1="66.9" y1="169.5" x2="820.2" y2="169.5" stroke="rgba(240,250,255,0.08)" stroke-width="1"/><line x1="66.9" y1="204.5" x2="820.2" y2="204.5" stroke="rgba(240,250,255,0.08)" stroke-width="1"/><polygon points="66.9,56.45 70.62,56.45 71.52,55.4 72.42,56.45 78.26,56.45 79.16,55.44 80.06,56.45 82.1,56.45 83,55.44 83.9,56.45 98.27,56.45 99.17,55.77 100.07,56.45 101.13,56.45 102.03,55.2 102.93,56.45 103.51,56.45 104.41,55.06 105.31,56.45 115.06,56.45 115.96,55.36 116.86,56.45 116.86,56.45 117.76,55.84 118.66,56.45 125.63,56.45 126.53,55.8 127.43,56.45 127.43,56.45 128.33,55.66 129.23,56.45 129.7,56.45 130.6,55.48 131.5,56.45 148.33,56.45 149.23,55.43 150.13,56.45 156.57,56.45 157.47,55.32 158.37,56.45 161.5,56.45 162.4,55.05 163.3,56.45 180,56.45 180.9,55.28 181.8,56.45 184.35,56.45 185.25,55.62 186.15,56.45 186.15,56.45 187.05,55.24 187.95,56.45 192.76,56.45 193.66,55.17 194.56,56.45 223.3,56.45 224.2,55.17 225.1,56.45 225.1,56.45 226,55.68 226.9,56.45 248.79,56.45 249.69,55.47 250.59,56.45 255.35,56.45 256.25,55.79 257.15,56.45 270.92,56.45 271.82,55.63 272.72,56.45 272.72,56.45 273.62,55.58 274.52,56.45 286.2,56.45 286.2,63.4 66.9,63.4" fill="#73BF69" fill-opacity="0.4"/><polygon points="66.9,63.4 286.2,63.4 286.2,204.97 285.9,204.88 284.9,204.81 283.9,205.29 282.9,205.51 281.9,205.47 280.9,205.09 279.9,206.69 278.9,205.04 277.9,205.4 276.9,204.84 275.9,204.99 274.9,205 273.9,204.48 272.9,204.97 271.9,205.75 270.9,204.28 269.9,204.69 268.9,205.12 267.9,205.26 266.9,204.69 265.9,205.13 264.9,205.29 263.9,205.17 262.9,204.81 261.9,204.69 260.9,205.23 259.9,205.16 258.9,204.22 257.9,204.4 256.9,204.69 255.9,204.74 254.9,205.21 253.9,204.22 252.9,204.72 251.9,204.76 250.9,205.12 249.9,205.34 248.9,205.93 247.9,205.21 246.9,204.42 245.9,204.88 244.9,204.86 243.9,204.87 242.9,205.02 241.9,205.11 240.9,206.54 239.9,205.02 238.9,205.82 237.9,204.35 236.9,204.71 235.9,206.1 234.9,204.49 233.9,205.27 232.9,204.46 231.9,204.58 230.9,205.28 229.9,205.09 228.9,205.23 227.9,205.22 226.9,204.97 225.9,204.45 224.9,204.84 223.9,204.65 222.9,204.84 221.9,204.5 220.9,204.35 219.9,206.4 218.9,204.59 217.9,204.47 216.9,204.23 215.9,204.36 214.9,204.94 213.9,204.58 212.9,205.28 211.9,204.72 210.9,204.77 209.9,205.31 208.9,204.7 207.9,204.28 206.9,204.79 205.9,205.16 204.9,204.82 203.9,204.23 202.9,204.8 201.9,204.44 200.9,204.83 199.9,205.22 198.9,205.28 197.9,204.66 196.9,204.87 195.9,204.83 194.9,205.07 193.9,204.83 192.9,204.3 191.9,204.79 190.9,205.03 189.9,205.07 188.9,204.38 187.9,205.15 186.9,204.41 185.9,204.28 184.9,206.34 183.9,204.86 182.9,205.71 181.9,205.29 180.9,205.15 179.9,205.37 178.9,205.28 177.9,205.06 176.9,205.18 175.9,204.45 174.9,204.76 173.9,205.16 172.9,204.88 171.9,205.29 170.9,204.74 169.9,205.07 168.9,207 167.9,204.67 166.9,204.94 165.9,205.04 164.9,204.53 163.9,205.06 162.9,205.55 161.9,204.44 160.9,205.35 159.9,204.99 158.9,204.74 157.9,204.26 156.9,204.48 155.9,206.33 154.9,205.86 153.9,204.88 152.9,206.68 151.9,205.32 150.9,205.21 149.9,204.79 148.9,204.7 147.9,204.53 146.9,204.4 145.9,205.34 144.9,205.22 143.9,204.8 142.9,204.58 141.9,204.66 140.9,205.3 139.9,204.72 138.9,205 137.9,205.27 136.9,204.99 135.9,204.4 134.9,205.01 133.9,205.43 132.9,204.94 131.9,205.04 130.9,204.78 129.9,204.24 128.9,204.3 127.9,204.73 126.9,205.08 125.9,205.07 124.9,205.39 123.9,204.3 122.9,204.9 121.9,204.95 120.9,205.24 119.9,204.7 118.9,205.28 117.9,204.62 116.9,205.15 115.9,205.08 114.9,205.08 113.9,204.29 112.9,204.58 111.9,204.78 110.9,204.23 109.9,205.04 108.9,205.93 107.9,204.9 106.9,204.99 105.9,205.27 104.9,204.36 103.9,204.64 102.9,205.5 101.9,204.22 100.9,205.3 99.9,204.94 98.9,204.87 97.9,204.28 96.9,204.41 95.9,204.92 94.9,204.51 93.9,204.49 92.9,206.08 91.9,204.92 90.9,205.34 89.9,205.33 88.9,204.43 87.9,205.18 86.9,204.38 85.9,205.24 84.9,204.78 83.9,204.74 82.9,204.92 81.9,204.9 80.9,205.21 79.9,205.13 78.9,204.46 77.9,204.32 76.9,205.23 75.9,204.45 74.9,204.56 73.9,205.37 72.9,204.46 71.9,206.04 70.9,205.08 69.9,204.74 68.9,204.41 67.9,205.87 66.9,205.96" fill="#8AB8FF" fill-opacity="0.4"/><polyline points="66.9,56.45 70.62,56.45 71.52,55.4 72.42,56.45 78.26,56.45 79.16,55.44 80.06,56.45 82.1,56.45 83,55.44 83.9,56.45 98.27,56.45 99.17,55.77 100.07,56.45 101.13,56.45 102.03,55.2 102.93,56.45 103.51,56.45 104.41,55.06 105.31,56.45 115.06,56.45 115.96,55.36 116.86,56.45 116.86,56.45 117.76,55.84 118.66,56.45 125.63,56.45 126.53,55.8 127.43,56.45 127.43,56.45 128.33,55.66 129.23,56.45 129.7,56.45 130.6,55.48 131.5,56.45 148.33,56.45 149.23,55.43 150.13,56.45 156.57,56.45 157.47,55.32 158.37,56.45 161.5,56.45 162.4,55.05 163.3,56.45 180,56.45 180.9,55.28 181.8,56.45 184.35,56.45 185.25,55.62 186.15,56.45 186.15,56.45 187.05,55.24 187.95,56.45 192.76,56.45 193.66,55.17 194.56,56.45 223.3,56.45 224.2,55.17 225.1,56.45 225.1,56.45 226,55.68 226.9,56.45 248.79,56.45 249.69,55.47 250.59,56.45 255.35,56.45 256.25,55.79 257.15,56.45 270.92,56.45 271.82,55.63 272.72,56.45 272.72,56.45 273.62,55.58 274.52,56.45 286.2,56.45" fill="none" stroke="#73BF69" stroke-width="1.0" stroke-opacity="0.82" stroke-linejoin="miter"/><polyline points="66.9,205.96 67.9,205.87 68.9,204.41 69.9,204.74 70.9,205.08 71.9,206.04 72.9,204.46 73.9,205.37 74.9,204.56 75.9,204.45 76.9,205.23 77.9,204.32 78.9,204.46 79.9,205.13 80.9,205.21 81.9,204.9 82.9,204.92 83.9,204.74 84.9,204.78 85.9,205.24 86.9,204.38 87.9,205.18 88.9,204.43 89.9,205.33 90.9,205.34 91.9,204.92 92.9,206.08 93.9,204.49 94.9,204.51 95.9,204.92 96.9,204.41 97.9,204.28 98.9,204.87 99.9,204.94 100.9,205.3 101.9,204.22 102.9,205.5 103.9,204.64 104.9,204.36 105.9,205.27 106.9,204.99 107.9,204.9 108.9,205.93 109.9,205.04 110.9,204.23 111.9,204.78 112.9,204.58 113.9,204.29 114.9,205.08 115.9,205.08 116.9,205.15 117.9,204.62 118.9,205.28 119.9,204.7 120.9,205.24 121.9,204.95 122.9,204.9 123.9,204.3 124.9,205.39 125.9,205.07 126.9,205.08 127.9,204.73 128.9,204.3 129.9,204.24 130.9,204.78 131.9,205.04 132.9,204.94 133.9,205.43 134.9,205.01 135.9,204.4 136.9,204.99 137.9,205.27 138.9,205 139.9,204.72 140.9,205.3 141.9,204.66 142.9,204.58 143.9,204.8 144.9,205.22 145.9,205.34 146.9,204.4 147.9,204.53 148.9,204.7 149.9,204.79 150.9,205.21 151.9,205.32 152.9,206.68 153.9,204.88 154.9,205.86 155.9,206.33 156.9,204.48 157.9,204.26 158.9,204.74 159.9,204.99 160.9,205.35 161.9,204.44 162.9,205.55 163.9,205.06 164.9,204.53 165.9,205.04 166.9,204.94 167.9,204.67 168.9,207 169.9,205.07 170.9,204.74 171.9,205.29 172.9,204.88 173.9,205.16 174.9,204.76 175.9,204.45 176.9,205.18 177.9,205.06 178.9,205.28 179.9,205.37 180.9,205.15 181.9,205.29 182.9,205.71 183.9,204.86 184.9,206.34 185.9,204.28 186.9,204.41 187.9,205.15 188.9,204.38 189.9,205.07 190.9,205.03 191.9,204.79 192.9,204.3 193.9,204.83 194.9,205.07 195.9,204.83 196.9,204.87 197.9,204.66 198.9,205.28 199.9,205.22 200.9,204.83 201.9,204.44 202.9,204.8 203.9,204.23 204.9,204.82 205.9,205.16 206.9,204.79 207.9,204.28 208.9,204.7 209.9,205.31 210.9,204.77 211.9,204.72 212.9,205.28 213.9,204.58 214.9,204.94 215.9,204.36 216.9,204.23 217.9,204.47 218.9,204.59 219.9,206.4 220.9,204.35 221.9,204.5 222.9,204.84 223.9,204.65 224.9,204.84 225.9,204.45 226.9,204.97 227.9,205.22 228.9,205.23 229.9,205.09 230.9,205.28 231.9,204.58 232.9,204.46 233.9,205.27 234.9,204.49 235.9,206.1 236.9,204.71 237.9,204.35 238.9,205.82 239.9,205.02 240.9,206.54 241.9,205.11 242.9,205.02 243.9,204.87 244.9,204.86 245.9,204.88 246.9,204.42 247.9,205.21 248.9,205.93 249.9,205.34 250.9,205.12 251.9,204.76 252.9,204.72 253.9,204.22 254.9,205.21 255.9,204.74 256.9,204.69 257.9,204.4 258.9,204.22 259.9,205.16 260.9,205.23 261.9,204.69 262.9,204.81 263.9,205.17 264.9,205.29 265.9,205.13 266.9,204.69 267.9,205.26 268.9,205.12 269.9,204.69 270.9,204.28 271.9,205.75 272.9,204.97 273.9,204.48 274.9,205 275.9,204.99 276.9,204.84 277.9,205.4 278.9,205.04 279.9,206.69 280.9,205.09 281.9,205.47 282.9,205.51 283.9,205.29 284.9,204.81 285.9,204.88 286.2,204.97" fill="none" stroke="#8AB8FF" stroke-width="1.0" stroke-opacity="0.85" stroke-linejoin="round"/><polyline points="66.9,63.3 286.2,63.3" fill="none" stroke="#F2CC0C" stroke-width="1.0" stroke-opacity="0.9" stroke-linejoin="round"/><polyline points="66.9,63.4 286.2,63.4" fill="none" stroke="#FF780A" stroke-width="1.0" stroke-opacity="0.75" stroke-linejoin="round"/><polygon points="290.4,56.45 296.98,56.45 297.88,55.79 298.78,56.45 311.79,56.45 312.69,55.81 313.59,56.45 315.36,56.45 316.26,55.47 317.16,56.45 317.16,56.45 318.06,55.45 318.96,56.45 327.66,56.45 328.56,55.8 329.46,56.45 334.58,56.45 335.48,55.43 336.38,56.45 340.67,56.45 341.57,55.62 342.47,56.45 350.07,56.45 350.97,55.62 351.87,56.45 355.23,56.45 356.13,55.84 357.03,56.45 357.03,56.45 357.93,55.82 358.83,56.45 360.56,56.45 361.46,55.25 362.36,56.45 383.07,56.45 383.97,55.25 384.87,56.45 384.87,56.45 385.77,55.06 386.67,56.45 412.89,56.45 413.79,55.79 414.69,56.45 419.94,56.45 420.84,55.47 421.74,56.45 424.45,56.45 425.35,55.43 426.25,56.45 438,56.45 438.9,55.48 439.8,56.45 455.27,56.45 456.17,55.37 457.07,56.45 457.07,56.45 457.97,55.35 458.87,56.45 464.54,56.45 465.44,55.69 466.34,56.45 466.34,56.45 467.24,55.43 468.14,56.45 469.53,56.45 470.43,55.5 471.33,56.45 477.01,56.45 477.91,55.64 478.81,56.45 483.9,56.45 484.8,55.23 485.7,56.45 540.32,56.45 541.22,55.09 542.12,56.45 544.77,56.45 545.67,55.76 546.57,56.45 560.58,56.45 561.48,55.35 562.38,56.45 565.43,56.45 566.33,55.3 567.23,56.45 575.49,56.45 576.39,55.34 577.29,56.45 579.39,56.45 580.29,55.65 581.19,56.45 603.65,56.45 604.55,55.15 605.45,56.45 605.45,56.45 606.35,55.8 607.25,56.45 610.29,56.45 611.19,55.51 612.09,56.45 613.27,56.45 614.17,55.42 615.07,56.45 615.07,56.45 615.97,55.78 616.87,56.45 627.22,56.45 628.12,55.41 629.02,56.45 633.42,56.45 634.32,55.47 635.22,56.45 635.22,56.45 636.12,55.58 637.02,56.45 649.51,56.45 650.41,55.18 651.31,56.45 651.31,56.45 652.21,55.75 653.11,56.45 668.22,56.45 669.12,55.35 670.02,56.45 672.38,56.45 673.28,55.51 674.18,56.45 674.18,56.45 675.08,55.2 675.98,56.45 680.32,56.45 681.22,55.33 682.12,56.45 685.86,56.45 686.76,55.41 687.66,56.45 710.69,56.45 711.59,55.51 712.49,56.45 713.61,56.45 714.51,55.15 715.41,56.45 715.41,56.45 716.31,55.78 717.21,56.45 724.88,56.45 725.78,55.46 726.68,56.45 730.08,56.45 730.98,55.23 731.88,56.45 731.88,56.45 732.78,55.68 733.68,56.45 743.64,56.45 744.54,55.78 745.44,56.45 757.26,56.45 758.16,55.29 759.06,56.45 759.06,56.45 759.96,55.74 760.86,56.45 765.05,56.45 765.95,55.27 766.85,56.45 768.17,56.45 769.07,55.28 769.97,56.45 792.74,56.45 793.64,55.1 794.54,56.45 799.93,56.45 800.83,55.21 801.73,56.45 805.37,56.45 806.27,55.53 807.17,56.45 820.2,56.45 820.2,63.4 290.4,63.4" fill="#73BF69" fill-opacity="0.4"/><polygon points="290.4,63.4 820.2,63.4 820.2,205.01 819.4,204.76 818.4,204.76 817.4,204.23 816.4,205.28 815.4,205 814.4,204.65 813.4,204.31 812.4,206.52 811.4,205.22 810.4,204.61 809.4,204.5 808.4,204.36 807.4,204.49 806.4,205.03 805.4,205.35 804.4,204.54 803.4,204.28 802.4,204.92 801.4,204.67 800.4,204.75 799.4,205.23 798.4,205.25 797.4,204.9 796.4,205.04 795.4,205.33 794.4,204.75 793.4,205.18 792.4,204.96 791.4,204.69 790.4,204.63 789.4,205.03 788.4,204.44 787.4,204.93 786.4,204.34 785.4,204.76 784.4,204.35 783.4,205.03 782.4,204.53 781.4,204.58 780.4,205.68 779.4,204.44 778.4,205.25 777.4,204.45 776.4,204.29 775.4,204.94 774.4,204.67 773.4,205.97 772.4,204.61 771.4,205.23 770.4,205.16 769.4,204.86 768.4,205.23 767.4,204.49 766.4,205.14 765.4,206.21 764.4,204.44 763.4,204.84 762.4,205.17 761.4,205.05 760.4,204.28 759.4,204.81 758.4,205.2 757.4,204.98 756.4,204.48 755.4,205.39 754.4,205.24 753.4,205.39 752.4,204.58 751.4,205.39 750.4,204.38 749.4,204.91 748.4,204.74 747.4,206.15 746.4,204.92 745.4,204.66 744.4,205 743.4,205.03 742.4,204.34 741.4,204.81 740.4,205.23 739.4,204.94 738.4,204.97 737.4,204.96 736.4,205.39 735.4,204.42 734.4,205.34 733.4,204.53 732.4,205.05 731.4,204.46 730.4,204.72 729.4,204.33 728.4,204.59 727.4,204.45 726.4,204.84 725.4,204.68 724.4,204.21 723.4,204.62 722.4,204.33 721.4,205.02 720.4,205.09 719.4,205.09 718.4,205.55 717.4,204.54 716.4,204.97 715.4,205.17 714.4,204.64 713.4,204.47 712.4,204.23 711.4,204.5 710.4,204.68 709.4,204.32 708.4,205.12 707.4,205.16 706.4,205.08 705.4,205.17 704.4,206.56 703.4,205.62 702.4,205.1 701.4,205.33 700.4,204.23 699.4,205.07 698.4,204.73 697.4,205.24 696.4,204.53 695.4,204.99 694.4,204.27 693.4,205.17 692.4,204.78 691.4,204.44 690.4,204.78 689.4,204.29 688.4,205.27 687.4,205.13 686.4,204.78 685.4,204.53 684.4,204.37 683.4,204.22 682.4,204.34 681.4,204.5 680.4,204.33 679.4,204.38 678.4,204.86 677.4,204.67 676.4,205.12 675.4,204.67 674.4,205.21 673.4,204.57 672.4,204.78 671.4,204.23 670.4,204.34 669.4,205.08 668.4,205.24 667.4,206.83 666.4,204.68 665.4,204.7 664.4,204.36 663.4,205.33 662.4,204.22 661.4,204.48 660.4,204.65 659.4,205.16 658.4,204.95 657.4,204.7 656.4,205.19 655.4,205.11 654.4,204.59 653.4,204.5 652.4,204.67 651.4,204.81 650.4,206.1 649.4,204.4 648.4,205.13 647.4,206.15 646.4,204.94 645.4,204.82 644.4,204.59 643.4,204.48 642.4,205.1 641.4,204.64 640.4,204.79 639.4,204.39 638.4,205.36 637.4,205.03 636.4,204.58 635.4,204.62 634.4,205.36 633.4,204.87 632.4,204.86 631.4,204.79 630.4,204.67 629.4,205.71 628.4,204.47 627.4,204.38 626.4,204.63 625.4,204.81 624.4,206 623.4,205.26 622.4,204.53 621.4,204.69 620.4,204.95 619.4,205.33 618.4,204.64 617.4,204.94 616.4,204.42 615.4,204.51 614.4,205.27 613.4,204.23 612.4,204.59 611.4,204.9 610.4,204.27 609.4,205.69 608.4,204.23 607.4,204.86 606.4,204.9 605.4,204.71 604.4,205.46 603.4,204.4 602.4,204.68 601.4,204.54 600.4,204.59 599.4,205.69 598.4,206.04 597.4,205.24 596.4,205 595.4,204.46 594.4,205 593.4,205.37 592.4,204.88 591.4,205.58 590.4,204.61 589.4,204.47 588.4,204.66 587.4,205.06 586.4,204.45 585.4,205 584.4,204.51 583.4,204.36 582.4,204.71 581.4,205.85 580.4,205.22 579.4,205.86 578.4,204.59 577.4,206.31 576.4,204.22 575.4,205.07 574.4,204.63 573.4,204.38 572.4,204.52 571.4,205.31 570.4,204.51 569.4,204.22 568.4,204.64 567.4,204.29 566.4,204.45 565.4,205.02 564.4,204.74 563.4,204.76 562.4,204.44 561.4,204.86 560.4,204.62 559.4,205.14 558.4,205.21 557.4,204.76 556.4,204.91 555.4,205.03 554.4,205.95 553.4,205.98 552.4,204.6 551.4,205.32 550.4,204.49 549.4,204.5 548.4,205.08 547.4,205.4 546.4,205.29 545.4,204.67 544.4,205.27 543.4,205.94 542.4,204.37 541.4,205.11 540.4,206.52 539.4,204.64 538.4,204.27 537.4,205.2 536.4,204.39 535.4,204.41 534.4,204.31 533.4,204.52 532.4,204.95 531.4,204.25 530.4,204.38 529.4,205.15 528.4,204.88 527.4,204.29 526.4,204.52 525.4,204.72 524.4,205.55 523.4,205.25 522.4,205.06 521.4,204.24 520.4,204.9 519.4,204.79 518.4,205.15 517.4,205.13 516.4,204.48 515.4,204.4 514.4,204.41 513.4,204.82 512.4,205.21 511.4,204.82 510.4,204.99 509.4,204.97 508.4,204.42 507.4,205.32 506.4,205.1 505.4,206.51 504.4,204.42 503.4,204.53 502.4,205.11 501.4,206.06 500.4,204.54 499.4,206.13 498.4,204.73 497.4,206.75 496.4,205 495.4,204.56 494.4,204.91 493.4,204.99 492.4,205.15 491.4,204.48 490.4,204.44 489.4,204.57 488.4,204.29 487.4,205.33 486.4,204.36 485.4,205.24 484.4,204.58 483.4,205.71 482.4,204.43 481.4,204.44 480.4,205.26 479.4,204.77 478.4,205.21 477.4,205.28 476.4,204.55 475.4,204.77 474.4,205.32 473.4,204.57 472.4,205.93 471.4,204.63 470.4,205.18 469.4,204.28 468.4,204.56 467.4,206.19 466.4,204.35 465.4,206.82 464.4,205.1 463.4,205.17 462.4,205.24 461.4,205.36 460.4,206.17 459.4,204.57 458.4,204.83 457.4,206.09 456.4,204.74 455.4,204.28 454.4,204.57 453.4,204.92 452.4,205.28 451.4,204.27 450.4,205.29 449.4,204.83 448.4,205.29 447.4,204.72 446.4,205.23 445.4,205.39 444.4,205.1 443.4,205.03 442.4,204.69 441.4,204.92 440.4,204.37 439.4,204.25 438.4,204.6 437.4,204.52 436.4,204.41 435.4,204.66 434.4,204.76 433.4,204.22 432.4,204.91 431.4,205.09 430.4,204.57 429.4,205.33 428.4,204.42 427.4,205.44 426.4,205.2 425.4,204.49 424.4,204.55 423.4,204.35 422.4,205.18 421.4,205.29 420.4,204.87 419.4,204.85 418.4,204.36 417.4,204.35 416.4,204.63 415.4,204.6 414.4,204.89 413.4,204.3 412.4,204.95 411.4,204.44 410.4,205.06 409.4,205.38 408.4,204.37 407.4,204.62 406.4,205.28 405.4,204.39 404.4,205.19 403.4,204.81 402.4,204.33 401.4,204.61 400.4,205.89 399.4,205.15 398.4,205.04 397.4,204.22 396.4,204.6 395.4,205.19 394.4,204.98 393.4,204.71 392.4,206.39 391.4,204.39 390.4,205.74 389.4,204.68 388.4,205.05 387.4,204.31 386.4,205.91 385.4,205.07 384.4,205.33 383.4,205.08 382.4,204.51 381.4,204.67 380.4,204.56 379.4,204.65 378.4,204.94 377.4,205.16 376.4,204.21 375.4,204.88 374.4,205.05 373.4,204.21 372.4,205.2 371.4,204.75 370.4,204.33 369.4,204.63 368.4,204.76 367.4,205.5 366.4,205.2 365.4,204.83 364.4,204.45 363.4,204.31 362.4,204.7 361.4,204.56 360.4,204.9 359.4,204.76 358.4,206.2 357.4,204.3 356.4,205.22 355.4,204.2 354.4,204.38 353.4,204.52 352.4,204.96 351.4,205.24 350.4,204.59 349.4,204.39 348.4,205.06 347.4,204.65 346.4,204.21 345.4,204.99 344.4,204.53 343.4,204.83 342.4,205.16 341.4,206.2 340.4,205.35 339.4,204.61 338.4,205.26 337.4,204.78 336.4,204.86 335.4,205.11 334.4,204.54 333.4,204.47 332.4,205.06 331.4,204.46 330.4,205.02 329.4,204.9 328.4,204.27 327.4,205.13 326.4,204.34 325.4,204.27 324.4,204.55 323.4,204.45 322.4,204.65 321.4,205.09 320.4,204.7 319.4,205.16 318.4,204.83 317.4,205.35 316.4,205.2 315.4,205.22 314.4,205.19 313.4,205.3 312.4,205.07 311.4,204.79 310.4,205.36 309.4,204.67 308.4,204.83 307.4,204.46 306.4,204.98 305.4,204.37 304.4,204.3 303.4,205.08 302.4,205.79 301.4,206.39 300.4,205.36 299.4,204.85 298.4,204.23 297.4,205.26 296.4,204.41 295.4,205.2 294.4,205.16 293.4,204.43 292.4,204.67 291.4,204.64 290.4,204.5" fill="#8AB8FF" fill-opacity="0.4"/><polyline points="290.4,56.45 296.98,56.45 297.88,55.79 298.78,56.45 311.79,56.45 312.69,55.81 313.59,56.45 315.36,56.45 316.26,55.47 317.16,56.45 317.16,56.45 318.06,55.45 318.96,56.45 327.66,56.45 328.56,55.8 329.46,56.45 334.58,56.45 335.48,55.43 336.38,56.45 340.67,56.45 341.57,55.62 342.47,56.45 350.07,56.45 350.97,55.62 351.87,56.45 355.23,56.45 356.13,55.84 357.03,56.45 357.03,56.45 357.93,55.82 358.83,56.45 360.56,56.45 361.46,55.25 362.36,56.45 383.07,56.45 383.97,55.25 384.87,56.45 384.87,56.45 385.77,55.06 386.67,56.45 412.89,56.45 413.79,55.79 414.69,56.45 419.94,56.45 420.84,55.47 421.74,56.45 424.45,56.45 425.35,55.43 426.25,56.45 438,56.45 438.9,55.48 439.8,56.45 455.27,56.45 456.17,55.37 457.07,56.45 457.07,56.45 457.97,55.35 458.87,56.45 464.54,56.45 465.44,55.69 466.34,56.45 466.34,56.45 467.24,55.43 468.14,56.45 469.53,56.45 470.43,55.5 471.33,56.45 477.01,56.45 477.91,55.64 478.81,56.45 483.9,56.45 484.8,55.23 485.7,56.45 540.32,56.45 541.22,55.09 542.12,56.45 544.77,56.45 545.67,55.76 546.57,56.45 560.58,56.45 561.48,55.35 562.38,56.45 565.43,56.45 566.33,55.3 567.23,56.45 575.49,56.45 576.39,55.34 577.29,56.45 579.39,56.45 580.29,55.65 581.19,56.45 603.65,56.45 604.55,55.15 605.45,56.45 605.45,56.45 606.35,55.8 607.25,56.45 610.29,56.45 611.19,55.51 612.09,56.45 613.27,56.45 614.17,55.42 615.07,56.45 615.07,56.45 615.97,55.78 616.87,56.45 627.22,56.45 628.12,55.41 629.02,56.45 633.42,56.45 634.32,55.47 635.22,56.45 635.22,56.45 636.12,55.58 637.02,56.45 649.51,56.45 650.41,55.18 651.31,56.45 651.31,56.45 652.21,55.75 653.11,56.45 668.22,56.45 669.12,55.35 670.02,56.45 672.38,56.45 673.28,55.51 674.18,56.45 674.18,56.45 675.08,55.2 675.98,56.45 680.32,56.45 681.22,55.33 682.12,56.45 685.86,56.45 686.76,55.41 687.66,56.45 710.69,56.45 711.59,55.51 712.49,56.45 713.61,56.45 714.51,55.15 715.41,56.45 715.41,56.45 716.31,55.78 717.21,56.45 724.88,56.45 725.78,55.46 726.68,56.45 730.08,56.45 730.98,55.23 731.88,56.45 731.88,56.45 732.78,55.68 733.68,56.45 743.64,56.45 744.54,55.78 745.44,56.45 757.26,56.45 758.16,55.29 759.06,56.45 759.06,56.45 759.96,55.74 760.86,56.45 765.05,56.45 765.95,55.27 766.85,56.45 768.17,56.45 769.07,55.28 769.97,56.45 792.74,56.45 793.64,55.1 794.54,56.45 799.93,56.45 800.83,55.21 801.73,56.45 805.37,56.45 806.27,55.53 807.17,56.45 820.2,56.45" fill="none" stroke="#73BF69" stroke-width="1.0" stroke-opacity="0.82" stroke-linejoin="miter"/><polyline points="290.4,204.5 291.4,204.64 292.4,204.67 293.4,204.43 294.4,205.16 295.4,205.2 296.4,204.41 297.4,205.26 298.4,204.23 299.4,204.85 300.4,205.36 301.4,206.39 302.4,205.79 303.4,205.08 304.4,204.3 305.4,204.37 306.4,204.98 307.4,204.46 308.4,204.83 309.4,204.67 310.4,205.36 311.4,204.79 312.4,205.07 313.4,205.3 314.4,205.19 315.4,205.22 316.4,205.2 317.4,205.35 318.4,204.83 319.4,205.16 320.4,204.7 321.4,205.09 322.4,204.65 323.4,204.45 324.4,204.55 325.4,204.27 326.4,204.34 327.4,205.13 328.4,204.27 329.4,204.9 330.4,205.02 331.4,204.46 332.4,205.06 333.4,204.47 334.4,204.54 335.4,205.11 336.4,204.86 337.4,204.78 338.4,205.26 339.4,204.61 340.4,205.35 341.4,206.2 342.4,205.16 343.4,204.83 344.4,204.53 345.4,204.99 346.4,204.21 347.4,204.65 348.4,205.06 349.4,204.39 350.4,204.59 351.4,205.24 352.4,204.96 353.4,204.52 354.4,204.38 355.4,204.2 356.4,205.22 357.4,204.3 358.4,206.2 359.4,204.76 360.4,204.9 361.4,204.56 362.4,204.7 363.4,204.31 364.4,204.45 365.4,204.83 366.4,205.2 367.4,205.5 368.4,204.76 369.4,204.63 370.4,204.33 371.4,204.75 372.4,205.2 373.4,204.21 374.4,205.05 375.4,204.88 376.4,204.21 377.4,205.16 378.4,204.94 379.4,204.65 380.4,204.56 381.4,204.67 382.4,204.51 383.4,205.08 384.4,205.33 385.4,205.07 386.4,205.91 387.4,204.31 388.4,205.05 389.4,204.68 390.4,205.74 391.4,204.39 392.4,206.39 393.4,204.71 394.4,204.98 395.4,205.19 396.4,204.6 397.4,204.22 398.4,205.04 399.4,205.15 400.4,205.89 401.4,204.61 402.4,204.33 403.4,204.81 404.4,205.19 405.4,204.39 406.4,205.28 407.4,204.62 408.4,204.37 409.4,205.38 410.4,205.06 411.4,204.44 412.4,204.95 413.4,204.3 414.4,204.89 415.4,204.6 416.4,204.63 417.4,204.35 418.4,204.36 419.4,204.85 420.4,204.87 421.4,205.29 422.4,205.18 423.4,204.35 424.4,204.55 425.4,204.49 426.4,205.2 427.4,205.44 428.4,204.42 429.4,205.33 430.4,204.57 431.4,205.09 432.4,204.91 433.4,204.22 434.4,204.76 435.4,204.66 436.4,204.41 437.4,204.52 438.4,204.6 439.4,204.25 440.4,204.37 441.4,204.92 442.4,204.69 443.4,205.03 444.4,205.1 445.4,205.39 446.4,205.23 447.4,204.72 448.4,205.29 449.4,204.83 450.4,205.29 451.4,204.27 452.4,205.28 453.4,204.92 454.4,204.57 455.4,204.28 456.4,204.74 457.4,206.09 458.4,204.83 459.4,204.57 460.4,206.17 461.4,205.36 462.4,205.24 463.4,205.17 464.4,205.1 465.4,206.82 466.4,204.35 467.4,206.19 468.4,204.56 469.4,204.28 470.4,205.18 471.4,204.63 472.4,205.93 473.4,204.57 474.4,205.32 475.4,204.77 476.4,204.55 477.4,205.28 478.4,205.21 479.4,204.77 480.4,205.26 481.4,204.44 482.4,204.43 483.4,205.71 484.4,204.58 485.4,205.24 486.4,204.36 487.4,205.33 488.4,204.29 489.4,204.57 490.4,204.44 491.4,204.48 492.4,205.15 493.4,204.99 494.4,204.91 495.4,204.56 496.4,205 497.4,206.75 498.4,204.73 499.4,206.13 500.4,204.54 501.4,206.06 502.4,205.11 503.4,204.53 504.4,204.42 505.4,206.51 506.4,205.1 507.4,205.32 508.4,204.42 509.4,204.97 510.4,204.99 511.4,204.82 512.4,205.21 513.4,204.82 514.4,204.41 515.4,204.4 516.4,204.48 517.4,205.13 518.4,205.15 519.4,204.79 520.4,204.9 521.4,204.24 522.4,205.06 523.4,205.25 524.4,205.55 525.4,204.72 526.4,204.52 527.4,204.29 528.4,204.88 529.4,205.15 530.4,204.38 531.4,204.25 532.4,204.95 533.4,204.52 534.4,204.31 535.4,204.41 536.4,204.39 537.4,205.2 538.4,204.27 539.4,204.64 540.4,206.52 541.4,205.11 542.4,204.37 543.4,205.94 544.4,205.27 545.4,204.67 546.4,205.29 547.4,205.4 548.4,205.08 549.4,204.5 550.4,204.49 551.4,205.32 552.4,204.6 553.4,205.98 554.4,205.95 555.4,205.03 556.4,204.91 557.4,204.76 558.4,205.21 559.4,205.14 560.4,204.62 561.4,204.86 562.4,204.44 563.4,204.76 564.4,204.74 565.4,205.02 566.4,204.45 567.4,204.29 568.4,204.64 569.4,204.22 570.4,204.51 571.4,205.31 572.4,204.52 573.4,204.38 574.4,204.63 575.4,205.07 576.4,204.22 577.4,206.31 578.4,204.59 579.4,205.86 580.4,205.22 581.4,205.85 582.4,204.71 583.4,204.36 584.4,204.51 585.4,205 586.4,204.45 587.4,205.06 588.4,204.66 589.4,204.47 590.4,204.61 591.4,205.58 592.4,204.88 593.4,205.37 594.4,205 595.4,204.46 596.4,205 597.4,205.24 598.4,206.04 599.4,205.69 600.4,204.59 601.4,204.54 602.4,204.68 603.4,204.4 604.4,205.46 605.4,204.71 606.4,204.9 607.4,204.86 608.4,204.23 609.4,205.69 610.4,204.27 611.4,204.9 612.4,204.59 613.4,204.23 614.4,205.27 615.4,204.51 616.4,204.42 617.4,204.94 618.4,204.64 619.4,205.33 620.4,204.95 621.4,204.69 622.4,204.53 623.4,205.26 624.4,206 625.4,204.81 626.4,204.63 627.4,204.38 628.4,204.47 629.4,205.71 630.4,204.67 631.4,204.79 632.4,204.86 633.4,204.87 634.4,205.36 635.4,204.62 636.4,204.58 637.4,205.03 638.4,205.36 639.4,204.39 640.4,204.79 641.4,204.64 642.4,205.1 643.4,204.48 644.4,204.59 645.4,204.82 646.4,204.94 647.4,206.15 648.4,205.13 649.4,204.4 650.4,206.1 651.4,204.81 652.4,204.67 653.4,204.5 654.4,204.59 655.4,205.11 656.4,205.19 657.4,204.7 658.4,204.95 659.4,205.16 660.4,204.65 661.4,204.48 662.4,204.22 663.4,205.33 664.4,204.36 665.4,204.7 666.4,204.68 667.4,206.83 668.4,205.24 669.4,205.08 670.4,204.34 671.4,204.23 672.4,204.78 673.4,204.57 674.4,205.21 675.4,204.67 676.4,205.12 677.4,204.67 678.4,204.86 679.4,204.38 680.4,204.33 681.4,204.5 682.4,204.34 683.4,204.22 684.4,204.37 685.4,204.53 686.4,204.78 687.4,205.13 688.4,205.27 689.4,204.29 690.4,204.78 691.4,204.44 692.4,204.78 693.4,205.17 694.4,204.27 695.4,204.99 696.4,204.53 697.4,205.24 698.4,204.73 699.4,205.07 700.4,204.23 701.4,205.33 702.4,205.1 703.4,205.62 704.4,206.56 705.4,205.17 706.4,205.08 707.4,205.16 708.4,205.12 709.4,204.32 710.4,204.68 711.4,204.5 712.4,204.23 713.4,204.47 714.4,204.64 715.4,205.17 716.4,204.97 717.4,204.54 718.4,205.55 719.4,205.09 720.4,205.09 721.4,205.02 722.4,204.33 723.4,204.62 724.4,204.21 725.4,204.68 726.4,204.84 727.4,204.45 728.4,204.59 729.4,204.33 730.4,204.72 731.4,204.46 732.4,205.05 733.4,204.53 734.4,205.34 735.4,204.42 736.4,205.39 737.4,204.96 738.4,204.97 739.4,204.94 740.4,205.23 741.4,204.81 742.4,204.34 743.4,205.03 744.4,205 745.4,204.66 746.4,204.92 747.4,206.15 748.4,204.74 749.4,204.91 750.4,204.38 751.4,205.39 752.4,204.58 753.4,205.39 754.4,205.24 755.4,205.39 756.4,204.48 757.4,204.98 758.4,205.2 759.4,204.81 760.4,204.28 761.4,205.05 762.4,205.17 763.4,204.84 764.4,204.44 765.4,206.21 766.4,205.14 767.4,204.49 768.4,205.23 769.4,204.86 770.4,205.16 771.4,205.23 772.4,204.61 773.4,205.97 774.4,204.67 775.4,204.94 776.4,204.29 777.4,204.45 778.4,205.25 779.4,204.44 780.4,205.68 781.4,204.58 782.4,204.53 783.4,205.03 784.4,204.35 785.4,204.76 786.4,204.34 787.4,204.93 788.4,204.44 789.4,205.03 790.4,204.63 791.4,204.69 792.4,204.96 793.4,205.18 794.4,204.75 795.4,205.33 796.4,205.04 797.4,204.9 798.4,205.25 799.4,205.23 800.4,204.75 801.4,204.67 802.4,204.92 803.4,204.28 804.4,204.54 805.4,205.35 806.4,205.03 807.4,204.49 808.4,204.36 809.4,204.5 810.4,204.61 811.4,205.22 812.4,206.52 813.4,204.31 814.4,204.65 815.4,205 816.4,205.28 817.4,204.23 818.4,204.76 819.4,204.76 820.2,205.01" fill="none" stroke="#8AB8FF" stroke-width="1.0" stroke-opacity="0.85" stroke-linejoin="round"/><polyline points="290.4,63.3 820.2,63.3" fill="none" stroke="#F2CC0C" stroke-width="1.0" stroke-opacity="0.9" stroke-linejoin="round"/><polyline points="290.4,63.4 820.2,63.4" fill="none" stroke="#FF780A" stroke-width="1.0" stroke-opacity="0.75" stroke-linejoin="round"/></svg><div class="ax"><span class="t" style="left:40.30px;top:57.73px;font-size:10.08px;color:#ccccdc;letter-spacing:-0.052px;will-change:transform;transform:scaleY(.875);transform-origin:0 8.27px;-webkit-text-stroke:0.12px #ccccdc;">0 b/s</span><span class="t" style="left:32.30px;top:92.73px;font-size:10.08px;color:#ccccdc;letter-spacing:-0.093px;will-change:transform;transform:scaleY(.875);transform-origin:0 8.27px;-webkit-text-stroke:0.12px #ccccdc;">-2 kb/s</span><span class="t" style="left:32.00px;top:128.73px;font-size:10.08px;color:#ccccdc;letter-spacing:-0.050px;will-change:transform;transform:scaleY(.875);transform-origin:0 8.27px;-webkit-text-stroke:0.12px #ccccdc;">-4 kb/s</span><span class="t" style="left:32.10px;top:163.73px;font-size:10.08px;color:#ccccdc;letter-spacing:-0.064px;will-change:transform;transform:scaleY(.875);transform-origin:0 8.27px;-webkit-text-stroke:0.12px #ccccdc;">-6 kb/s</span><span class="t" style="left:32.10px;top:198.73px;font-size:10.08px;color:#ccccdc;letter-spacing:-0.064px;will-change:transform;transform:scaleY(.875);transform-origin:0 8.27px;-webkit-text-stroke:0.12px #ccccdc;">-8 kb/s</span><span class="t" style="left:-26.55px;top:125.26px;font-size:10.08px;color:#ccccdc;transform:rotate(-90deg);transform-origin:50% 50%;will-change:transform;letter-spacing:-0.072px;">bits out (-) / in (+)</span><span class="t" style="left:89.90px;top:228.73px;font-size:10.08px;color:#ccccdc;letter-spacing:-0.567px;will-change:transform;transform:scaleY(.875);transform-origin:0 8.27px;-webkit-text-stroke:0.12px #ccccdc;">18:00</span><span class="t" style="left:152.10px;top:228.73px;font-size:10.08px;color:#ccccdc;letter-spacing:-0.247px;will-change:transform;transform:scaleY(.875);transform-origin:0 8.27px;-webkit-text-stroke:0.12px #ccccdc;">20:00</span><span class="t" style="left:214.10px;top:228.73px;font-size:10.08px;color:#ccccdc;letter-spacing:-0.247px;will-change:transform;transform:scaleY(.875);transform-origin:0 8.27px;-webkit-text-stroke:0.12px #ccccdc;">22:00</span><span class="t" style="left:277.10px;top:228.73px;font-size:10.08px;color:#ccccdc;letter-spacing:-0.247px;will-change:transform;transform:scaleY(.875);transform-origin:0 8.27px;-webkit-text-stroke:0.12px #ccccdc;">00:00</span><span class="t" style="left:340.10px;top:228.73px;font-size:10.08px;color:#ccccdc;letter-spacing:-0.247px;will-change:transform;transform:scaleY(.875);transform-origin:0 8.27px;-webkit-text-stroke:0.12px #ccccdc;">02:00</span><span class="t" style="left:403.10px;top:228.73px;font-size:10.08px;color:#ccccdc;letter-spacing:-0.247px;will-change:transform;transform:scaleY(.875);transform-origin:0 8.27px;-webkit-text-stroke:0.12px #ccccdc;">04:00</span><span class="t" style="left:466.10px;top:228.73px;font-size:10.08px;color:#ccccdc;letter-spacing:-0.247px;will-change:transform;transform:scaleY(.875);transform-origin:0 8.27px;-webkit-text-stroke:0.12px #ccccdc;">06:00</span><span class="t" style="left:528.10px;top:228.73px;font-size:10.08px;color:#ccccdc;letter-spacing:-0.247px;will-change:transform;transform:scaleY(.875);transform-origin:0 8.27px;-webkit-text-stroke:0.12px #ccccdc;">08:00</span><span class="t" style="left:591.90px;top:228.73px;font-size:10.08px;color:#ccccdc;letter-spacing:-0.567px;will-change:transform;transform:scaleY(.875);transform-origin:0 8.27px;-webkit-text-stroke:0.12px #ccccdc;">10:00</span><span class="t" style="left:654.90px;top:228.73px;font-size:10.08px;color:#ccccdc;letter-spacing:-0.567px;will-change:transform;transform:scaleY(.875);transform-origin:0 8.27px;-webkit-text-stroke:0.12px #ccccdc;">12:00</span><span class="t" style="left:717.90px;top:228.73px;font-size:10.08px;color:#ccccdc;letter-spacing:-0.567px;will-change:transform;transform:scaleY(.875);transform-origin:0 8.27px;-webkit-text-stroke:0.12px #ccccdc;">14:00</span><span class="t" style="left:780.90px;top:228.73px;font-size:10.08px;color:#ccccdc;letter-spacing:-0.567px;will-change:transform;transform:scaleY(.875);transform-origin:0 8.27px;-webkit-text-stroke:0.12px #ccccdc;">16:00</span></div><span class="t" style="left:29.40px;top:242.73px;font-size:10.08px;color:#6e9fff;letter-spacing:-0.323px;-webkit-text-stroke:0.4px #6e9fff;will-change:transform;transform:scaleY(.875);transform-origin:0 8.27px;">Name</span><span class="t" style="left:637.90px;top:242.73px;font-size:10.08px;color:#6e9fff;letter-spacing:-0.155px;-webkit-text-stroke:0.4px #6e9fff;will-change:transform;transform:scaleY(.875);transform-origin:0 8.27px;">Mean</span><span class="t" style="left:691.50px;top:242.73px;font-size:10.08px;color:#6e9fff;letter-spacing:-0.064px;-webkit-text-stroke:0.4px #6e9fff;will-change:transform;transform:scaleY(.875);transform-origin:0 8.27px;">Last *</span><span class="t" style="left:746.00px;top:242.73px;font-size:10.08px;color:#6e9fff;letter-spacing:-0.216px;-webkit-text-stroke:0.4px #6e9fff;will-change:transform;transform:scaleY(.875);transform-origin:0 8.27px;">Max</span><span class="t" style="left:798.50px;top:242.73px;font-size:10.08px;color:#6e9fff;letter-spacing:0.083px;-webkit-text-stroke:0.4px #6e9fff;will-change:transform;transform:scaleY(.875);transform-origin:0 8.27px;">Min</span><div class="b" style="left:7.00px;top:256.00px;width:819.00px;height:1.00px;background:rgba(204,204,220,0.12)"></div><div class="b" style="left:7.00px;top:274.00px;width:819.00px;height:1.00px;background:rgba(204,204,220,0.12)"></div><div class="b" style="left:7.00px;top:292.00px;width:819.00px;height:1.00px;background:rgba(204,204,220,0.12)"></div><div class="b" style="left:7.00px;top:310.00px;width:819.00px;height:1.00px;background:rgba(204,204,220,0.12)"></div><div class="b" style="left:7.00px;top:328.00px;width:819.00px;height:1.00px;background:rgba(204,204,220,0.12)"></div><div class="b" style="left:12.90px;top:263.60px;width:11.20px;height:3.30px;background:#73BF69;border-radius:1.6px"></div><span class="t" style="left:29.40px;top:260.73px;font-size:10.08px;color:#ccccdc;letter-spacing:-0.138px;will-change:transform;transform:scaleY(.875);transform-origin:0 8.27px;-webkit-text-stroke:0.12px #ccccdc;">ens3 - Receive</span><span class="t" style="left:631.31px;top:260.73px;font-size:10.08px;color:#ccccdc;letter-spacing:-0.225px;will-change:transform;transform:scaleY(.875);transform-origin:0 8.27px;-webkit-text-stroke:0.12px #ccccdc;">413 b/s</span><span class="t" style="left:685.81px;top:260.73px;font-size:10.08px;color:#ccccdc;letter-spacing:-0.225px;will-change:transform;transform:scaleY(.875);transform-origin:0 8.27px;-webkit-text-stroke:0.12px #ccccdc;">422 b/s</span><span class="t" style="left:738.91px;top:260.73px;font-size:10.08px;color:#ccccdc;letter-spacing:-0.225px;will-change:transform;transform:scaleY(.875);transform-origin:0 8.27px;-webkit-text-stroke:0.12px #ccccdc;">547 b/s</span><span class="t" style="left:788.11px;top:260.73px;font-size:10.08px;color:#ccccdc;letter-spacing:-0.225px;will-change:transform;transform:scaleY(.875);transform-origin:0 8.27px;-webkit-text-stroke:0.12px #ccccdc;">389 b/s</span><div class="b" style="left:12.90px;top:281.60px;width:11.20px;height:3.30px;background:#F2CC0C;border-radius:1.6px"></div><span class="t" style="left:29.40px;top:278.73px;font-size:10.08px;color:#ccccdc;letter-spacing:-0.135px;will-change:transform;transform:scaleY(.875);transform-origin:0 8.27px;-webkit-text-stroke:0.12px #ccccdc;">lo - Receive</span><span class="t" style="left:641.98px;top:278.73px;font-size:10.08px;color:#ccccdc;letter-spacing:-0.208px;will-change:transform;transform:scaleY(.875);transform-origin:0 8.27px;-webkit-text-stroke:0.12px #ccccdc;">0 b/s</span><span class="t" style="left:696.48px;top:278.73px;font-size:10.08px;color:#ccccdc;letter-spacing:-0.208px;will-change:transform;transform:scaleY(.875);transform-origin:0 8.27px;-webkit-text-stroke:0.12px #ccccdc;">0 b/s</span><span class="t" style="left:749.58px;top:278.73px;font-size:10.08px;color:#ccccdc;letter-spacing:-0.208px;will-change:transform;transform:scaleY(.875);transform-origin:0 8.27px;-webkit-text-stroke:0.12px #ccccdc;">0 b/s</span><span class="t" style="left:798.78px;top:278.73px;font-size:10.08px;color:#ccccdc;letter-spacing:-0.208px;will-change:transform;transform:scaleY(.875);transform-origin:0 8.27px;-webkit-text-stroke:0.12px #ccccdc;">0 b/s</span><div class="b" style="left:12.90px;top:299.60px;width:11.20px;height:3.30px;background:#8AB8FF;border-radius:1.6px"></div><span class="t" style="left:29.40px;top:296.73px;font-size:10.08px;color:#ccccdc;letter-spacing:-0.064px;will-change:transform;transform:scaleY(.875);transform-origin:0 8.27px;-webkit-text-stroke:0.12px #ccccdc;">ens3 - Transmit</span><span class="t" style="left:623.84px;top:296.73px;font-size:10.08px;color:#ccccdc;letter-spacing:-0.216px;will-change:transform;transform:scaleY(.875);transform-origin:0 8.27px;-webkit-text-stroke:0.12px #ccccdc;">8.04 kb/s</span><span class="t" style="left:678.34px;top:296.73px;font-size:10.08px;color:#ccccdc;letter-spacing:-0.216px;will-change:transform;transform:scaleY(.875);transform-origin:0 8.27px;-webkit-text-stroke:0.12px #ccccdc;">8.07 kb/s</span><span class="t" style="left:731.44px;top:296.73px;font-size:10.08px;color:#ccccdc;letter-spacing:-0.216px;will-change:transform;transform:scaleY(.875);transform-origin:0 8.27px;-webkit-text-stroke:0.12px #ccccdc;">8.20 kb/s</span><span class="t" style="left:780.64px;top:296.73px;font-size:10.08px;color:#ccccdc;letter-spacing:-0.216px;will-change:transform;transform:scaleY(.875);transform-origin:0 8.27px;-webkit-text-stroke:0.12px #ccccdc;">7.91 kb/s</span><div class="b" style="left:12.90px;top:317.60px;width:11.20px;height:3.30px;background:#FF780A;border-radius:1.6px"></div><span class="t" style="left:29.40px;top:314.73px;font-size:10.08px;color:#ccccdc;letter-spacing:-0.050px;will-change:transform;transform:scaleY(.875);transform-origin:0 8.27px;-webkit-text-stroke:0.12px #ccccdc;">lo - Transmit</span><span class="t" style="left:641.98px;top:314.73px;font-size:10.08px;color:#ccccdc;letter-spacing:-0.208px;will-change:transform;transform:scaleY(.875);transform-origin:0 8.27px;-webkit-text-stroke:0.12px #ccccdc;">0 b/s</span><span class="t" style="left:696.48px;top:314.73px;font-size:10.08px;color:#ccccdc;letter-spacing:-0.208px;will-change:transform;transform:scaleY(.875);transform-origin:0 8.27px;-webkit-text-stroke:0.12px #ccccdc;">0 b/s</span><span class="t" style="left:749.58px;top:314.73px;font-size:10.08px;color:#ccccdc;letter-spacing:-0.208px;will-change:transform;transform:scaleY(.875);transform-origin:0 8.27px;-webkit-text-stroke:0.12px #ccccdc;">0 b/s</span><span class="t" style="left:798.78px;top:314.73px;font-size:10.08px;color:#ccccdc;letter-spacing:-0.208px;will-change:transform;transform:scaleY(.875);transform-origin:0 8.27px;-webkit-text-stroke:0.12px #ccccdc;">0 b/s</span></section><section class="panel" style="left:1076px;top:400px;width:833px;height:336px"><span class="t" style="left:7.10px;top:7.30px;font-size:11.76px;color:#ccccdc;letter-spacing:-0.275px;-webkit-text-stroke:0.4px #ccccdc;">Disk Space Used</span><svg class="plot" width="833" height="336" viewBox="0 0 833 336"><line x1="106.5" y1="37.1" x2="106.5" y2="213.3" stroke="rgba(240,250,255,0.08)" stroke-width="1"/><line x1="169.5" y1="37.1" x2="169.5" y2="213.3" stroke="rgba(240,250,255,0.08)" stroke-width="1"/><line x1="231.5" y1="37.1" x2="231.5" y2="213.3" stroke="rgba(240,250,255,0.08)" stroke-width="1"/><line x1="293.5" y1="37.1" x2="293.5" y2="213.3" stroke="rgba(240,250,255,0.08)" stroke-width="1"/><line x1="356.5" y1="37.1" x2="356.5" y2="213.3" stroke="rgba(240,250,255,0.08)" stroke-width="1"/><line x1="418.5" y1="37.1" x2="418.5" y2="213.3" stroke="rgba(240,250,255,0.08)" stroke-width="1"/><line x1="481.5" y1="37.1" x2="481.5" y2="213.3" stroke="rgba(240,250,255,0.08)" stroke-width="1"/><line x1="543.5" y1="37.1" x2="543.5" y2="213.3" stroke="rgba(240,250,255,0.08)" stroke-width="1"/><line x1="605.5" y1="37.1" x2="605.5" y2="213.3" stroke="rgba(240,250,255,0.08)" stroke-width="1"/><line x1="668.5" y1="37.1" x2="668.5" y2="213.3" stroke="rgba(240,250,255,0.08)" stroke-width="1"/><line x1="730.5" y1="37.1" x2="730.5" y2="213.3" stroke="rgba(240,250,255,0.08)" stroke-width="1"/><line x1="793.5" y1="37.1" x2="793.5" y2="213.3" stroke="rgba(240,250,255,0.08)" stroke-width="1"/><line x1="72.5" y1="47.5" x2="821" y2="47.5" stroke="rgba(240,250,255,0.08)" stroke-width="1"/><line x1="72.5" y1="70.5" x2="821" y2="70.5" stroke="rgba(240,250,255,0.08)" stroke-width="1"/><line x1="72.5" y1="94.5" x2="821" y2="94.5" stroke="rgba(240,250,255,0.08)" stroke-width="1"/><line x1="72.5" y1="117.5" x2="821" y2="117.5" stroke="rgba(240,250,255,0.08)" stroke-width="1"/><line x1="72.5" y1="140.5" x2="821" y2="140.5" stroke="rgba(240,250,255,0.08)" stroke-width="1"/><line x1="72.5" y1="163.5" x2="821" y2="163.5" stroke="rgba(240,250,255,0.08)" stroke-width="1"/><line x1="72.5" y1="186.5" x2="821" y2="186.5" stroke="rgba(240,250,255,0.08)" stroke-width="1"/><line x1="72.5" y1="209.5" x2="821" y2="209.5" stroke="rgba(240,250,255,0.08)" stroke-width="1"/><polygon points="72.5,54.4 116.2,54.4 117.4,53.5 289.3,53.5 289.3,209.3 72.5,209.3" fill="#73BF69" fill-opacity="0.4"/><polyline points="72.5,54.4 116.2,54.4 117.4,53.5 289.3,53.5" fill="none" stroke="#73BF69" stroke-width="1.0" stroke-opacity="0.85" stroke-linejoin="round"/><polyline points="72.5,209.5 289.3,209.5" fill="none" stroke="#F2495C" stroke-width="1.2" stroke-opacity="0.9" stroke-linejoin="round"/><polyline points="72.5,208.8 289.3,208.8" fill="none" stroke="#FF9830" stroke-width="1.0" stroke-opacity="0.95" stroke-linejoin="round"/><polyline points="72.5,208.3 289.3,208.3" fill="none" stroke="#F2CC0C" stroke-width="0.8" stroke-opacity="0.8" stroke-linejoin="round"/><polygon points="294.3,53.5 821,53.5 821,209.3 294.3,209.3" fill="#73BF69" fill-opacity="0.4"/><polyline points="294.3,53.5 821,53.5" fill="none" stroke="#73BF69" stroke-width="1.0" stroke-opacity="0.85" stroke-linejoin="round"/><polyline points="294.3,209.5 821,209.5" fill="none" stroke="#F2495C" stroke-width="1.2" stroke-opacity="0.9" stroke-linejoin="round"/><polyline points="294.3,208.8 821,208.8" fill="none" stroke="#FF9830" stroke-width="1.0" stroke-opacity="0.95" stroke-linejoin="round"/><polyline points="294.3,208.3 821,208.3" fill="none" stroke="#F2CC0C" stroke-width="0.8" stroke-opacity="0.8" stroke-linejoin="round"/></svg><div class="ax"><span class="t" style="left:34.00px;top:41.73px;font-size:10.08px;color:#ccccdc;letter-spacing:-0.715px;will-change:transform;transform:scaleY(.875);transform-origin:0 8.27px;-webkit-text-stroke:0.12px #ccccdc;">1.75 GiB</span><span class="t" style="left:33.70px;top:64.73px;font-size:10.08px;color:#ccccdc;letter-spacing:-0.677px;will-change:transform;transform:scaleY(.875);transform-origin:0 8.27px;-webkit-text-stroke:0.12px #ccccdc;">1.50 GiB</span><span class="t" style="left:33.60px;top:88.73px;font-size:10.08px;color:#ccccdc;letter-spacing:-0.665px;will-change:transform;transform:scaleY(.875);transform-origin:0 8.27px;-webkit-text-stroke:0.12px #ccccdc;">1.25 GiB</span><span class="t" style="left:46.90px;top:111.73px;font-size:10.08px;color:#ccccdc;letter-spacing:-0.924px;will-change:transform;transform:scaleY(.875);transform-origin:0 8.27px;-webkit-text-stroke:0.12px #ccccdc;">1 GiB</span><span class="t" style="left:34.00px;top:134.73px;font-size:10.08px;color:#ccccdc;letter-spacing:-0.498px;will-change:transform;transform:scaleY(.875);transform-origin:0 8.27px;-webkit-text-stroke:0.12px #ccccdc;">768 MiB</span><span class="t" style="left:34.70px;top:157.73px;font-size:10.08px;color:#ccccdc;letter-spacing:-0.598px;will-change:transform;transform:scaleY(.875);transform-origin:0 8.27px;-webkit-text-stroke:0.12px #ccccdc;">512 MiB</span><span class="t" style="left:32.90px;top:180.73px;font-size:10.08px;color:#ccccdc;letter-spacing:-0.341px;will-change:transform;transform:scaleY(.875);transform-origin:0 8.27px;-webkit-text-stroke:0.12px #ccccdc;">256 MiB</span><span class="t" style="left:53.90px;top:203.73px;font-size:10.08px;color:#ccccdc;letter-spacing:-0.514px;will-change:transform;transform:scaleY(.875);transform-origin:0 8.27px;-webkit-text-stroke:0.12px #ccccdc;">0 B</span><span class="t" style="left:0.85px;top:117.76px;font-size:10.08px;color:#ccccdc;transform:rotate(-90deg);transform-origin:50% 50%;will-change:transform;letter-spacing:-0.119px;">bytes</span><span class="t" style="left:94.90px;top:214.73px;font-size:10.08px;color:#ccccdc;letter-spacing:-0.567px;will-change:transform;transform:scaleY(.875);transform-origin:0 8.27px;-webkit-text-stroke:0.12px #ccccdc;">18:00</span><span class="t" style="left:157.10px;top:214.73px;font-size:10.08px;color:#ccccdc;letter-spacing:-0.247px;will-change:transform;transform:scaleY(.875);transform-origin:0 8.27px;-webkit-text-stroke:0.12px #ccccdc;">20:00</span><span class="t" style="left:219.10px;top:214.73px;font-size:10.08px;color:#ccccdc;letter-spacing:-0.247px;will-change:transform;transform:scaleY(.875);transform-origin:0 8.27px;-webkit-text-stroke:0.12px #ccccdc;">22:00</span><span class="t" style="left:281.10px;top:214.73px;font-size:10.08px;color:#ccccdc;letter-spacing:-0.247px;will-change:transform;transform:scaleY(.875);transform-origin:0 8.27px;-webkit-text-stroke:0.12px #ccccdc;">00:00</span><span class="t" style="left:344.10px;top:214.73px;font-size:10.08px;color:#ccccdc;letter-spacing:-0.247px;will-change:transform;transform:scaleY(.875);transform-origin:0 8.27px;-webkit-text-stroke:0.12px #ccccdc;">02:00</span><span class="t" style="left:406.10px;top:214.73px;font-size:10.08px;color:#ccccdc;letter-spacing:-0.247px;will-change:transform;transform:scaleY(.875);transform-origin:0 8.27px;-webkit-text-stroke:0.12px #ccccdc;">04:00</span><span class="t" style="left:469.10px;top:214.73px;font-size:10.08px;color:#ccccdc;letter-spacing:-0.247px;will-change:transform;transform:scaleY(.875);transform-origin:0 8.27px;-webkit-text-stroke:0.12px #ccccdc;">06:00</span><span class="t" style="left:531.10px;top:214.73px;font-size:10.08px;color:#ccccdc;letter-spacing:-0.247px;will-change:transform;transform:scaleY(.875);transform-origin:0 8.27px;-webkit-text-stroke:0.12px #ccccdc;">08:00</span><span class="t" style="left:593.90px;top:214.73px;font-size:10.08px;color:#ccccdc;letter-spacing:-0.567px;will-change:transform;transform:scaleY(.875);transform-origin:0 8.27px;-webkit-text-stroke:0.12px #ccccdc;">10:00</span><span class="t" style="left:656.90px;top:214.73px;font-size:10.08px;color:#ccccdc;letter-spacing:-0.567px;will-change:transform;transform:scaleY(.875);transform-origin:0 8.27px;-webkit-text-stroke:0.12px #ccccdc;">12:00</span><span class="t" style="left:718.90px;top:214.73px;font-size:10.08px;color:#ccccdc;letter-spacing:-0.567px;will-change:transform;transform:scaleY(.875);transform-origin:0 8.27px;-webkit-text-stroke:0.12px #ccccdc;">14:00</span><span class="t" style="left:781.90px;top:214.73px;font-size:10.08px;color:#ccccdc;letter-spacing:-0.567px;will-change:transform;transform:scaleY(.875);transform-origin:0 8.27px;-webkit-text-stroke:0.12px #ccccdc;">16:00</span></div><span class="t" style="left:29.40px;top:228.73px;font-size:10.08px;color:#6e9fff;letter-spacing:-0.323px;-webkit-text-stroke:0.4px #6e9fff;will-change:transform;transform:scaleY(.875);transform-origin:0 8.27px;">Name</span><span class="t" style="left:639.00px;top:228.73px;font-size:10.08px;color:#6e9fff;letter-spacing:-0.155px;-webkit-text-stroke:0.4px #6e9fff;will-change:transform;transform:scaleY(.875);transform-origin:0 8.27px;">Mean</span><span class="t" style="left:692.80px;top:228.73px;font-size:10.08px;color:#6e9fff;letter-spacing:-0.064px;-webkit-text-stroke:0.4px #6e9fff;will-change:transform;transform:scaleY(.875);transform-origin:0 8.27px;">Last *</span><span class="t" style="left:747.10px;top:228.73px;font-size:10.08px;color:#6e9fff;letter-spacing:-0.216px;-webkit-text-stroke:0.4px #6e9fff;will-change:transform;transform:scaleY(.875);transform-origin:0 8.27px;">Max</span><span class="t" style="left:797.30px;top:228.73px;font-size:10.08px;color:#6e9fff;letter-spacing:0.083px;-webkit-text-stroke:0.4px #6e9fff;will-change:transform;transform:scaleY(.875);transform-origin:0 8.27px;">Min</span><div class="b" style="left:7.00px;top:242.00px;width:819.00px;height:1.00px;background:rgba(204,204,220,0.12)"></div><div class="b" style="left:7.00px;top:260.00px;width:819.00px;height:1.00px;background:rgba(204,204,220,0.12)"></div><div class="b" style="left:7.00px;top:278.00px;width:819.00px;height:1.00px;background:rgba(204,204,220,0.12)"></div><div class="b" style="left:7.00px;top:296.00px;width:819.00px;height:1.00px;background:rgba(204,204,220,0.12)"></div><div class="b" style="left:7.00px;top:314.00px;width:819.00px;height:1.00px;background:rgba(204,204,220,0.12)"></div><div class="b" style="left:12.90px;top:249.60px;width:11.20px;height:3.30px;background:#73BF69;border-radius:1.6px"></div><span class="t" style="left:29.40px;top:246.73px;font-size:10.08px;color:#ccccdc;letter-spacing:0.388px;will-change:transform;transform:scaleY(.875);transform-origin:0 8.27px;-webkit-text-stroke:0.12px #ccccdc;">/</span><span class="t" style="left:626.95px;top:246.73px;font-size:10.08px;color:#ccccdc;letter-spacing:-0.233px;will-change:transform;transform:scaleY(.875);transform-origin:0 8.27px;-webkit-text-stroke:0.12px #ccccdc;">1.68 GiB</span><span class="t" style="left:681.45px;top:246.73px;font-size:10.08px;color:#ccccdc;letter-spacing:-0.233px;will-change:transform;transform:scaleY(.875);transform-origin:0 8.27px;-webkit-text-stroke:0.12px #ccccdc;">1.68 GiB</span><span class="t" style="left:731.85px;top:246.73px;font-size:10.08px;color:#ccccdc;letter-spacing:-0.233px;will-change:transform;transform:scaleY(.875);transform-origin:0 8.27px;-webkit-text-stroke:0.12px #ccccdc;">1.68 GiB</span><span class="t" style="left:782.35px;top:246.73px;font-size:10.08px;color:#ccccdc;letter-spacing:-0.233px;will-change:transform;transform:scaleY(.875);transform-origin:0 8.27px;-webkit-text-stroke:0.12px #ccccdc;">1.68 GiB</span><div class="b" style="left:12.90px;top:267.60px;width:11.20px;height:3.30px;background:#F2CC0C;border-radius:1.6px"></div><span class="t" style="left:29.40px;top:264.73px;font-size:10.08px;color:#ccccdc;letter-spacing:0.127px;will-change:transform;transform:scaleY(.875);transform-origin:0 8.27px;-webkit-text-stroke:0.12px #ccccdc;">/boot/efi</span><span class="t" style="left:626.41px;top:264.73px;font-size:10.08px;color:#ccccdc;letter-spacing:-0.237px;will-change:transform;transform:scaleY(.875);transform-origin:0 8.27px;-webkit-text-stroke:0.12px #ccccdc;">6.04 MiB</span><span class="t" style="left:680.91px;top:264.73px;font-size:10.08px;color:#ccccdc;letter-spacing:-0.237px;will-change:transform;transform:scaleY(.875);transform-origin:0 8.27px;-webkit-text-stroke:0.12px #ccccdc;">6.04 MiB</span><span class="t" style="left:731.31px;top:264.73px;font-size:10.08px;color:#ccccdc;letter-spacing:-0.237px;will-change:transform;transform:scaleY(.875);transform-origin:0 8.27px;-webkit-text-stroke:0.12px #ccccdc;">6.04 MiB</span><span class="t" style="left:781.81px;top:264.73px;font-size:10.08px;color:#ccccdc;letter-spacing:-0.237px;will-change:transform;transform:scaleY(.875);transform-origin:0 8.27px;-webkit-text-stroke:0.12px #ccccdc;">6.04 MiB</span><div class="b" style="left:12.90px;top:286.60px;width:11.20px;height:3.30px;background:#8AB8FF;border-radius:1.6px"></div><span class="t" style="left:29.40px;top:283.73px;font-size:10.08px;color:#ccccdc;letter-spacing:0.156px;will-change:transform;transform:scaleY(.875);transform-origin:0 8.27px;-webkit-text-stroke:0.12px #ccccdc;">/run</span><span class="t" style="left:626.41px;top:283.73px;font-size:10.08px;color:#ccccdc;letter-spacing:-0.237px;will-change:transform;transform:scaleY(.875);transform-origin:0 8.27px;-webkit-text-stroke:0.12px #ccccdc;">1.00 MiB</span><span class="t" style="left:680.91px;top:283.73px;font-size:10.08px;color:#ccccdc;letter-spacing:-0.237px;will-change:transform;transform:scaleY(.875);transform-origin:0 8.27px;-webkit-text-stroke:0.12px #ccccdc;">1.00 MiB</span><span class="t" style="left:731.31px;top:283.73px;font-size:10.08px;color:#ccccdc;letter-spacing:-0.237px;will-change:transform;transform:scaleY(.875);transform-origin:0 8.27px;-webkit-text-stroke:0.12px #ccccdc;">1.02 MiB</span><span class="t" style="left:795.16px;top:283.73px;font-size:10.08px;color:#ccccdc;letter-spacing:-0.245px;will-change:transform;transform:scaleY(.875);transform-origin:0 8.27px;-webkit-text-stroke:0.12px #ccccdc;">1 MiB</span><div class="b" style="left:12.90px;top:304.60px;width:11.20px;height:3.30px;background:#FF780A;border-radius:1.6px"></div><span class="t" style="left:29.40px;top:301.73px;font-size:10.08px;color:#ccccdc;letter-spacing:0.078px;will-change:transform;transform:scaleY(.875);transform-origin:0 8.27px;-webkit-text-stroke:0.12px #ccccdc;">/run/lock</span><span class="t" style="left:649.88px;top:301.73px;font-size:10.08px;color:#ccccdc;letter-spacing:-0.240px;will-change:transform;transform:scaleY(.875);transform-origin:0 8.27px;-webkit-text-stroke:0.12px #ccccdc;">0 B</span><span class="t" style="left:704.38px;top:301.73px;font-size:10.08px;color:#ccccdc;letter-spacing:-0.240px;will-change:transform;transform:scaleY(.875);transform-origin:0 8.27px;-webkit-text-stroke:0.12px #ccccdc;">0 B</span><span class="t" style="left:754.78px;top:301.73px;font-size:10.08px;color:#ccccdc;letter-spacing:-0.240px;will-change:transform;transform:scaleY(.875);transform-origin:0 8.27px;-webkit-text-stroke:0.12px #ccccdc;">0 B</span><span class="t" style="left:805.28px;top:301.73px;font-size:10.08px;color:#ccccdc;letter-spacing:-0.240px;will-change:transform;transform:scaleY(.875);transform-origin:0 8.27px;-webkit-text-stroke:0.12px #ccccdc;">0 B</span><div class="b" style="left:12.90px;top:322.60px;width:11.20px;height:3.30px;background:#F2495C;border-radius:1.6px"></div><span class="t" style="left:29.40px;top:319.73px;font-size:10.08px;color:#ccccdc;letter-spacing:-0.006px;will-change:transform;transform:scaleY(.875);transform-origin:0 8.27px;-webkit-text-stroke:0.12px #ccccdc;">/run/snapd/ns</span><span class="t" style="left:626.41px;top:319.73px;font-size:10.08px;color:#ccccdc;letter-spacing:-0.237px;will-change:transform;transform:scaleY(.875);transform-origin:0 8.27px;-webkit-text-stroke:0.12px #ccccdc;">1.00 MiB</span><span class="t" style="left:680.91px;top:319.73px;font-size:10.08px;color:#ccccdc;letter-spacing:-0.237px;will-change:transform;transform:scaleY(.875);transform-origin:0 8.27px;-webkit-text-stroke:0.12px #ccccdc;">1.00 MiB</span><span class="t" style="left:731.31px;top:319.73px;font-size:10.08px;color:#ccccdc;letter-spacing:-0.237px;will-change:transform;transform:scaleY(.875);transform-origin:0 8.27px;-webkit-text-stroke:0.12px #ccccdc;">1.02 MiB</span><span class="t" style="left:795.16px;top:319.73px;font-size:10.08px;color:#ccccdc;letter-spacing:-0.245px;will-change:transform;transform:scaleY(.875);transform-origin:0 8.27px;-webkit-text-stroke:0.12px #ccccdc;">1 MiB</span><div class="b" style="left:819.00px;top:240.00px;width:3.00px;height:57.00px;background:rgba(204,204,220,0.75);border-radius:1.5px"></div></section><section class="panel" style="left:237px;top:742px;width:833px;height:336px"><span class="t" style="left:7.10px;top:7.30px;font-size:11.76px;color:#ccccdc;letter-spacing:-0.293px;-webkit-text-stroke:0.4px #ccccdc;">Disk IOps</span><svg class="plot" width="833" height="336" viewBox="0 0 833 336"><line x1="94.5" y1="37.1" x2="94.5" y2="261.6" stroke="rgba(240,250,255,0.08)" stroke-width="1"/><line x1="157.5" y1="37.1" x2="157.5" y2="261.6" stroke="rgba(240,250,255,0.08)" stroke-width="1"/><line x1="221.5" y1="37.1" x2="221.5" y2="261.6" stroke="rgba(240,250,255,0.08)" stroke-width="1"/><line x1="284.5" y1="37.1" x2="284.5" y2="261.6" stroke="rgba(240,250,255,0.08)" stroke-width="1"/><line x1="348.5" y1="37.1" x2="348.5" y2="261.6" stroke="rgba(240,250,255,0.08)" stroke-width="1"/><line x1="411.5" y1="37.1" x2="411.5" y2="261.6" stroke="rgba(240,250,255,0.08)" stroke-width="1"/><line x1="474.5" y1="37.1" x2="474.5" y2="261.6" stroke="rgba(240,250,255,0.08)" stroke-width="1"/><line x1="538.5" y1="37.1" x2="538.5" y2="261.6" stroke="rgba(240,250,255,0.08)" stroke-width="1"/><line x1="601.5" y1="37.1" x2="601.5" y2="261.6" stroke="rgba(240,250,255,0.08)" stroke-width="1"/><line x1="665.5" y1="37.1" x2="665.5" y2="261.6" stroke="rgba(240,250,255,0.08)" stroke-width="1"/><line x1="728.5" y1="37.1" x2="728.5" y2="261.6" stroke="rgba(240,250,255,0.08)" stroke-width="1"/><line x1="792.5" y1="37.1" x2="792.5" y2="261.6" stroke="rgba(240,250,255,0.08)" stroke-width="1"/><line x1="59.4" y1="63.5" x2="820.5" y2="63.5" stroke="rgba(240,250,255,0.08)" stroke-width="1"/><line x1="59.4" y1="106.5" x2="820.5" y2="106.5" stroke="rgba(240,250,255,0.08)" stroke-width="1"/><line x1="59.4" y1="149.5" x2="820.5" y2="149.5" stroke="rgba(240,250,255,0.08)" stroke-width="1"/><line x1="59.4" y1="192.5" x2="820.5" y2="192.5" stroke="rgba(240,250,255,0.08)" stroke-width="1"/><line x1="59.4" y1="235.5" x2="820.5" y2="235.5" stroke="rgba(240,250,255,0.08)" stroke-width="1"/><polyline points="727,235.55 728.4,240.7 729.9,235.55" fill="none" stroke="#56A64B" stroke-width="1.0" stroke-opacity="0.9" stroke-linejoin="miter"/><polyline points="59.4,235.35 71.3,235.35 72,184 72.5,184.4 74.3,235.35 101.6,235.35 102.5,233.2 103.4,235.35 103.7,235.35 104.4,188 105.7,235.35 161.2,235.35 162.1,233.05 163,235.35 179.4,235.35 180.3,233.05 181.2,235.35 284.6,235.35 285.1,222.2 286.6,232.6 288,235.35 289.7,235.35 290.6,233.35 291.5,235.35 302.4,235.35 303.3,233.05 304.2,235.35 374.4,235.35 375.3,231.15 376.2,235.35 431.6,235.35 432.5,233.05 433.4,235.35 505.9,235.35 506.7,227.2 507.6,235.35 508.3,235.35 509.1,227.2 510.2,235.35 576.4,235.35 577.5,233.4 578.4,235.35 578.7,235.35 579.4,227.2 580.5,235.35 627.5,235.35 628.4,231.15 629.3,235.35 645.4,235.35 646.3,231.15 647.2,235.35 675.4,235.35 676.3,232.95 677.2,235.35 727.6,235.35 728.2,56.2 728.6,56.3 729.3,235.35 730.5,235.35 731.4,232.95 732.3,235.35 768.7,235.35 769.6,232.95 770.5,235.35 820.5,235.35" fill="none" stroke="#E5C30E" stroke-width="1.0" stroke-opacity="0.95" stroke-linejoin="miter"/></svg><div class="ax"><span class="t" style="left:31.20px;top:57.73px;font-size:10.08px;color:#ccccdc;letter-spacing:-0.049px;will-change:transform;transform:scaleY(.875);transform-origin:0 8.27px;-webkit-text-stroke:0.12px #ccccdc;">8 io/s</span><span class="t" style="left:31.20px;top:100.73px;font-size:10.08px;color:#ccccdc;letter-spacing:-0.049px;will-change:transform;transform:scaleY(.875);transform-origin:0 8.27px;-webkit-text-stroke:0.12px #ccccdc;">6 io/s</span><span class="t" style="left:31.00px;top:143.73px;font-size:10.08px;color:#ccccdc;letter-spacing:-0.016px;will-change:transform;transform:scaleY(.875);transform-origin:0 8.27px;-webkit-text-stroke:0.12px #ccccdc;">4 io/s</span><span class="t" style="left:31.40px;top:186.73px;font-size:10.08px;color:#ccccdc;letter-spacing:-0.082px;will-change:transform;transform:scaleY(.875);transform-origin:0 8.27px;-webkit-text-stroke:0.12px #ccccdc;">2 io/s</span><span class="t" style="left:31.10px;top:229.73px;font-size:10.08px;color:#ccccdc;letter-spacing:-0.032px;will-change:transform;transform:scaleY(.875);transform-origin:0 8.27px;-webkit-text-stroke:0.12px #ccccdc;">0 io/s</span><span class="t" style="left:-31.90px;top:145.46px;font-size:10.08px;color:#ccccdc;transform:rotate(-90deg);transform-origin:50% 50%;will-change:transform;letter-spacing:-0.198px;">IO read (-) / write (+)</span><span class="t" style="left:82.90px;top:264.73px;font-size:10.08px;color:#ccccdc;letter-spacing:-0.567px;will-change:transform;transform:scaleY(.875);transform-origin:0 8.27px;-webkit-text-stroke:0.12px #ccccdc;">18:00</span><span class="t" style="left:145.10px;top:264.73px;font-size:10.08px;color:#ccccdc;letter-spacing:-0.247px;will-change:transform;transform:scaleY(.875);transform-origin:0 8.27px;-webkit-text-stroke:0.12px #ccccdc;">20:00</span><span class="t" style="left:209.10px;top:264.73px;font-size:10.08px;color:#ccccdc;letter-spacing:-0.247px;will-change:transform;transform:scaleY(.875);transform-origin:0 8.27px;-webkit-text-stroke:0.12px #ccccdc;">22:00</span><span class="t" style="left:272.10px;top:264.73px;font-size:10.08px;color:#ccccdc;letter-spacing:-0.247px;will-change:transform;transform:scaleY(.875);transform-origin:0 8.27px;-webkit-text-stroke:0.12px #ccccdc;">00:00</span><span class="t" style="left:336.10px;top:264.73px;font-size:10.08px;color:#ccccdc;letter-spacing:-0.247px;will-change:transform;transform:scaleY(.875);transform-origin:0 8.27px;-webkit-text-stroke:0.12px #ccccdc;">02:00</span><span class="t" style="left:399.10px;top:264.73px;font-size:10.08px;color:#ccccdc;letter-spacing:-0.247px;will-change:transform;transform:scaleY(.875);transform-origin:0 8.27px;-webkit-text-stroke:0.12px #ccccdc;">04:00</span><span class="t" style="left:462.10px;top:264.73px;font-size:10.08px;color:#ccccdc;letter-spacing:-0.247px;will-change:transform;transform:scaleY(.875);transform-origin:0 8.27px;-webkit-text-stroke:0.12px #ccccdc;">06:00</span><span class="t" style="left:526.10px;top:264.73px;font-size:10.08px;color:#ccccdc;letter-spacing:-0.247px;will-change:transform;transform:scaleY(.875);transform-origin:0 8.27px;-webkit-text-stroke:0.12px #ccccdc;">08:00</span><span class="t" style="left:589.90px;top:264.73px;font-size:10.08px;color:#ccccdc;letter-spacing:-0.567px;will-change:transform;transform:scaleY(.875);transform-origin:0 8.27px;-webkit-text-stroke:0.12px #ccccdc;">10:00</span><span class="t" style="left:653.90px;top:264.73px;font-size:10.08px;color:#ccccdc;letter-spacing:-0.567px;will-change:transform;transform:scaleY(.875);transform-origin:0 8.27px;-webkit-text-stroke:0.12px #ccccdc;">12:00</span><span class="t" style="left:716.90px;top:264.73px;font-size:10.08px;color:#ccccdc;letter-spacing:-0.567px;will-change:transform;transform:scaleY(.875);transform-origin:0 8.27px;-webkit-text-stroke:0.12px #ccccdc;">14:00</span><span class="t" style="left:780.90px;top:264.73px;font-size:10.08px;color:#ccccdc;letter-spacing:-0.567px;will-change:transform;transform:scaleY(.875);transform-origin:0 8.27px;-webkit-text-stroke:0.12px #ccccdc;">16:00</span></div><span class="t" style="left:29.40px;top:278.73px;font-size:10.08px;color:#6e9fff;letter-spacing:-0.323px;-webkit-text-stroke:0.4px #6e9fff;will-change:transform;transform:scaleY(.875);transform-origin:0 8.27px;">Name</span><span class="t" style="left:631.50px;top:278.73px;font-size:10.08px;color:#6e9fff;letter-spacing:-0.155px;-webkit-text-stroke:0.4px #6e9fff;will-change:transform;transform:scaleY(.875);transform-origin:0 8.27px;">Mean</span><span class="t" style="left:693.40px;top:278.73px;font-size:10.08px;color:#6e9fff;letter-spacing:-0.064px;-webkit-text-stroke:0.4px #6e9fff;will-change:transform;transform:scaleY(.875);transform-origin:0 8.27px;">Last *</span><span class="t" style="left:747.70px;top:278.73px;font-size:10.08px;color:#6e9fff;letter-spacing:-0.216px;-webkit-text-stroke:0.4px #6e9fff;will-change:transform;transform:scaleY(.875);transform-origin:0 8.27px;">Max</span><span class="t" style="left:803.50px;top:278.73px;font-size:10.08px;color:#6e9fff;letter-spacing:0.083px;-webkit-text-stroke:0.4px #6e9fff;will-change:transform;transform:scaleY(.875);transform-origin:0 8.27px;">Min</span></section><section class="panel" style="left:1076px;top:742px;width:833px;height:336px"><span class="t" style="left:7.10px;top:7.30px;font-size:11.76px;color:#ccccdc;letter-spacing:-0.216px;-webkit-text-stroke:0.4px #ccccdc;">I/O Usage Read / Write</span><svg class="plot" width="833" height="336" viewBox="0 0 833 336"><line x1="71.25" y1="63.5" x2="826" y2="63.5" stroke="rgba(240,250,255,0.08)" stroke-width="1"/><line x1="71.25" y1="91.5" x2="826" y2="91.5" stroke="rgba(240,250,255,0.08)" stroke-width="1"/><line x1="71.25" y1="120.5" x2="826" y2="120.5" stroke="rgba(240,250,255,0.08)" stroke-width="1"/><line x1="71.25" y1="149.5" x2="826" y2="149.5" stroke="rgba(240,250,255,0.08)" stroke-width="1"/><line x1="71.25" y1="177.5" x2="826" y2="177.5" stroke="rgba(240,250,255,0.08)" stroke-width="1"/><line x1="71.25" y1="206.5" x2="826" y2="206.5" stroke="rgba(240,250,255,0.08)" stroke-width="1"/><line x1="71.25" y1="235.5" x2="826" y2="235.5" stroke="rgba(240,250,255,0.08)" stroke-width="1"/><line x1="71.25" y1="263.5" x2="826" y2="263.5" stroke="rgba(240,250,255,0.08)" stroke-width="1"/><polygon points="115,235.35 116.3,248.6 117.6,235.35" fill="#56A64B" fill-opacity="0.85"/><polyline points="290.9,235.35 291.4,223 291.9,235.35" fill="none" stroke="#3a3b30" stroke-width="1.0" stroke-opacity="0.8" stroke-linejoin="miter"/><polyline points="734.2,235.55 735.3,237.8 736.4,235.55" fill="none" stroke="#56A64B" stroke-width="1.0" stroke-opacity="0.9" stroke-linejoin="miter"/><polyline points="71.25,235.35 83.6,235.35 84.2,201 84.6,201.1 85.3,235.35 113.2,235.35 114.2,233.2 115,235.35 115.4,235.35 116.1,176 116.5,176.1 117.2,235.35 173.2,235.35 174.1,233.05 175,235.35 190.4,235.35 191.3,233.05 192.2,235.35 294.8,235.35 295.3,187 296.3,233.4 297.2,235.35 297.4,235.35 298.3,233.55 299.2,235.35 300.2,235.35 301.1,233.05 302,235.35 312.3,235.35 313.2,233.05 314.1,235.35 384.4,235.35 385.3,231.15 386.2,235.35 440.4,235.35 441.3,233.05 442.2,235.35 515.1,235.35 515.9,230.2 516.8,235.35 517.6,235.35 518.5,230.2 519.5,235.35 584.3,235.35 585.2,233.6 586,235.35 586.4,235.35 587.3,230.35 588.2,235.35 635.5,235.35 636.4,231.15 637.3,235.35 652.6,235.35 653.5,231.15 654.4,235.35 683.5,235.35 684.4,233.05 685.3,235.35 734.5,235.35 735.1,56.9 735.5,57 736.2,235.35 738.6,235.35 739.5,233.05 740.4,235.35 775.4,235.35 776.3,233.05 777.2,235.35 826,235.35" fill="none" stroke="#E5C30E" stroke-width="1.0" stroke-opacity="0.95" stroke-linejoin="miter"/></svg><div class="ax"><span class="t" style="left:34.20px;top:57.73px;font-size:10.08px;color:#ccccdc;letter-spacing:-0.132px;will-change:transform;transform:scaleY(.875);transform-origin:0 8.27px;-webkit-text-stroke:0.12px #ccccdc;">60 kB/s</span><span class="t" style="left:34.30px;top:85.73px;font-size:10.08px;color:#ccccdc;letter-spacing:-0.146px;will-change:transform;transform:scaleY(.875);transform-origin:0 8.27px;-webkit-text-stroke:0.12px #ccccdc;">50 kB/s</span><span class="t" style="left:34.00px;top:114.73px;font-size:10.08px;color:#ccccdc;letter-spacing:-0.104px;will-change:transform;transform:scaleY(.875);transform-origin:0 8.27px;-webkit-text-stroke:0.12px #ccccdc;">40 kB/s</span><span class="t" style="left:34.30px;top:143.73px;font-size:10.08px;color:#ccccdc;letter-spacing:-0.146px;will-change:transform;transform:scaleY(.875);transform-origin:0 8.27px;-webkit-text-stroke:0.12px #ccccdc;">30 kB/s</span><span class="t" style="left:34.80px;top:171.73px;font-size:10.08px;color:#ccccdc;letter-spacing:-0.218px;will-change:transform;transform:scaleY(.875);transform-origin:0 8.27px;-webkit-text-stroke:0.12px #ccccdc;">20 kB/s</span><span class="t" style="left:36.30px;top:200.73px;font-size:10.08px;color:#ccccdc;letter-spacing:-0.432px;will-change:transform;transform:scaleY(.875);transform-origin:0 8.27px;-webkit-text-stroke:0.12px #ccccdc;">10 kB/s</span><span class="t" style="left:44.80px;top:229.73px;font-size:10.08px;color:#ccccdc;letter-spacing:-0.174px;will-change:transform;transform:scaleY(.875);transform-origin:0 8.27px;-webkit-text-stroke:0.12px #ccccdc;">0 B/s</span><span class="t" style="left:32.80px;top:257.73px;font-size:10.08px;color:#ccccdc;letter-spacing:-0.359px;will-change:transform;transform:scaleY(.875);transform-origin:0 8.27px;-webkit-text-stroke:0.12px #ccccdc;">-10 kB/s</span><span class="t" style="left:-38.65px;top:148.46px;font-size:10.08px;color:#ccccdc;transform:rotate(-90deg);transform-origin:50% 50%;will-change:transform;letter-spacing:-0.097px;">bytes read (-) / write (+)</span></div><span class="t" style="left:29.40px;top:278.73px;font-size:10.08px;color:#6e9fff;letter-spacing:-0.323px;-webkit-text-stroke:0.4px #6e9fff;will-change:transform;transform:scaleY(.875);transform-origin:0 8.27px;">Name</span><span class="t" style="left:644.70px;top:278.73px;font-size:10.08px;color:#6e9fff;letter-spacing:-0.155px;-webkit-text-stroke:0.4px #6e9fff;will-change:transform;transform:scaleY(.875);transform-origin:0 8.27px;">Mean</span><span class="t" style="left:698.00px;top:278.73px;font-size:10.08px;color:#6e9fff;letter-spacing:-0.064px;-webkit-text-stroke:0.4px #6e9fff;will-change:transform;transform:scaleY(.875);transform-origin:0 8.27px;">Last *</span><span class="t" style="left:752.10px;top:278.73px;font-size:10.08px;color:#6e9fff;letter-spacing:-0.216px;-webkit-text-stroke:0.4px #6e9fff;will-change:transform;transform:scaleY(.875);transform-origin:0 8.27px;">Max</span><span class="t" style="left:803.60px;top:278.73px;font-size:10.08px;color:#6e9fff;letter-spacing:0.083px;-webkit-text-stroke:0.4px #6e9fff;will-change:transform;transform:scaleY(.875);transform-origin:0 8.27px;">Min</span></section></main><div class="toolbar"><div class="b" style="left:13.00px;top:12.00px;width:196.00px;height:24.00px;border:1px solid rgba(204,204,220,0.20);border-radius:2px;background:#111217"></div><div class="b" style="left:14.00px;top:13.00px;width:62.50px;height:22.00px;background:#181b1f;border-right:1px solid rgba(204,204,220,0.20)"></div><span class="t" style="left:19.60px;top:19.73px;font-size:10.08px;color:#ccccdc;letter-spacing:-0.145px;-webkit-text-stroke:0.4px #ccccdc;will-change:transform;transform:scaleY(.875);transform-origin:0 8.27px;">Datasource</span><span class="t" style="left:83.50px;top:18.30px;font-size:11.76px;color:#ccccdc;letter-spacing:-0.096px;">prometheus-source</span><svg class="ic" style="left:187.60px;top:17.00px" width="16" height="16" viewBox="-8 -8 16 16" fill="none" stroke="#ccccdc" stroke-width="1.3" stroke-linecap="round" stroke-linejoin="round" ><path d="M-2.3 -1.150 0 1.150 2.3 -1.150"/></svg><div class="b" style="left:215.00px;top:12.00px;width:131.00px;height:24.00px;border:1px solid rgba(204,204,220,0.20);border-radius:2px;background:#111217"></div><div class="b" style="left:216.00px;top:13.00px;width:29.90px;height:22.00px;background:#181b1f;border-right:1px solid rgba(204,204,220,0.20)"></div><span class="t" style="left:222.40px;top:19.73px;font-size:10.08px;color:#ccccdc;letter-spacing:-0.050px;-webkit-text-stroke:0.4px #ccccdc;will-change:transform;transform:scaleY(.875);transform-origin:0 8.27px;">Job</span><span class="t" style="left:252.10px;top:18.30px;font-size:11.76px;color:#ccccdc;letter-spacing:-0.074px;">openstack-sd</span><svg class="ic" style="left:325.00px;top:17.00px" width="16" height="16" viewBox="-8 -8 16 16" fill="none" stroke="#ccccdc" stroke-width="1.3" stroke-linecap="round" stroke-linejoin="round" ><path d="M-2.3 -1.150 0 1.150 2.3 -1.150"/></svg><div class="b" style="left:353.00px;top:12.00px;width:119.00px;height:24.00px;border:1px solid rgba(204,204,220,0.20);border-radius:2px;background:#111217"></div><div class="b" style="left:354.00px;top:13.00px;width:33.90px;height:22.00px;background:#181b1f;border-right:1px solid rgba(204,204,220,0.20)"></div><span class="t" style="left:360.50px;top:19.73px;font-size:10.08px;color:#ccccdc;letter-spacing:-0.109px;-webkit-text-stroke:0.4px #ccccdc;will-change:transform;transform:scaleY(.875);transform-origin:0 8.27px;">Host</span><span class="t" style="left:394.00px;top:18.30px;font-size:11.76px;color:#ccccdc;letter-spacing:-0.334px;">gan-node1</span><svg class="ic" style="left:451.00px;top:17.00px" width="16" height="16" viewBox="-8 -8 16 16" fill="none" stroke="#ccccdc" stroke-width="1.3" stroke-linecap="round" stroke-linejoin="round" ><path d="M-2.3 -1.150 0 1.150 2.3 -1.150"/></svg><div class="b" style="left:1271.00px;top:12.00px;width:63.00px;height:24.00px;border:1px solid rgba(204,204,220,0.20);border-radius:2px;background:#111217"></div><svg class="ic" style="left:1276.00px;top:15.90px" width="16" height="16" viewBox="-8 -8 16 16" fill="none" stroke="#ccccdc" stroke-width="1.2" stroke-linecap="round" stroke-linejoin="round" ><path d="M4.4 .600v3a1 1 0 0 1-1 1h-6.800a1 1 0 0 1-1-1v-6.800a1 1 0 0 1 1-1h3"/><path d="M1.6 -4.700h3.300v3.300M4.7 -4.5-.6.8"/></svg><span class="t" style="left:1296.50px;top:19.73px;font-size:10.08px;color:#ccccdc;letter-spacing:-0.212px;-webkit-text-stroke:0.4px #ccccdc;will-change:transform;transform:scaleY(.875);transform-origin:0 8.27px;">GitHub</span><div class="b" style="left:1340.00px;top:12.00px;width:67.00px;height:24.00px;border:1px solid rgba(204,204,220,0.20);border-radius:2px;background:#111217"></div><svg class="ic" style="left:1345.00px;top:15.90px" width="16" height="16" viewBox="-8 -8 16 16" fill="none" stroke="#ccccdc" stroke-width="1.2" stroke-linecap="round" stroke-linejoin="round" ><path d="M4.4 .600v3a1 1 0 0 1-1 1h-6.800a1 1 0 0 1-1-1v-6.800a1 1 0 0 1 1-1h3"/><path d="M1.6 -4.700h3.300v3.300M4.7 -4.5-.6.8"/></svg><span class="t" style="left:1364.80px;top:19.73px;font-size:10.08px;color:#ccccdc;letter-spacing:-0.289px;-webkit-text-stroke:0.4px #ccccdc;will-change:transform;transform:scaleY(.875);transform-origin:0 8.27px;">Grafana</span><div class="b" style="left:1413.00px;top:12.00px;width:149.00px;height:24.00px;background:#202227;border:1px solid #2b2d33;border-radius:2px"></div><div class="b" style="left:1535.00px;top:12.00px;width:1.00px;height:24.00px;background:#2c2e34"></div><svg class="ic" style="left:1418.60px;top:16.00px" width="16" height="16" viewBox="-8 -8 16 16" fill="none" stroke="#ccccdc" stroke-width="1.2" stroke-linecap="round" stroke-linejoin="round" ><circle cx="0" cy="0" r="5.2"/><path d="M0 -3v3.200h-2.4"/></svg><span class="t" style="left:1439.30px;top:18.30px;font-size:11.76px;color:#ccccdc;letter-spacing:-0.139px;-webkit-text-stroke:0.35px #ccccdc;">Last 24 hours</span><svg class="ic" style="left:1515.00px;top:16.60px" width="16" height="16" viewBox="-8 -8 16 16" fill="none" stroke="#ccccdc" stroke-width="1.3" stroke-linecap="round" stroke-linejoin="round" ><path d="M-2.3 -1.150 0 1.150 2.3 -1.150"/></svg><svg class="ic" style="left:1540.60px;top:16.10px" width="16" height="16" viewBox="-8 -8 16 16" fill="none" stroke="#ccccdc" stroke-width="1.2" stroke-linecap="round" stroke-linejoin="round" ><circle cx="-.8" cy="-.8" r="4.4"/><path d="M2.4 2.4 5.2 5.200M-2.7 -.8h3.8"/></svg><div class="b" style="left:1568.00px;top:12.00px;width:125.00px;height:24.00px;background:#202227;border:1px solid #2b2d33;border-radius:2px"></div><div class="b" style="left:1640.00px;top:12.00px;width:1.00px;height:24.00px;background:#2c2e34"></div><svg class="ic" style="left:1573.50px;top:16.00px" width="16" height="16" viewBox="-8 -8 16 16" fill="none" stroke="#ccccdc" stroke-width="1.2" stroke-linecap="round" stroke-linejoin="round" ><path d="M4.7 -1.700A4.9 4.9 0 0 0 -3.9 -3M-4.7 1.700A4.9 4.9 0 0 0 3.9 3"/><path d="M-4.3 -5.300v2.600h2.600M4.3 5.300v-2.600h-2.6"/></svg><span class="t" style="left:1594.60px;top:18.30px;font-size:11.76px;color:#ccccdc;letter-spacing:-0.265px;-webkit-text-stroke:0.35px #ccccdc;">Refresh</span><span class="t" style="left:1646.80px;top:18.30px;font-size:11.76px;color:#ccccdc;letter-spacing:-1.264px;-webkit-text-stroke:0.35px #ccccdc;">1m</span><svg class="ic" style="left:1661.90px;top:16.60px" width="16" height="16" viewBox="-8 -8 16 16" fill="none" stroke="#ccccdc" stroke-width="1.3" stroke-linecap="round" stroke-linejoin="round" ><path d="M-2.3 -1.150 0 1.150 2.3 -1.150"/></svg></div><nav class="side"><svg class="ic" style="left:34.10px;top:9.90px" width="16" height="16" viewBox="-8 -8 16 16" fill="none" stroke="rgba(204,204,220,0.65)" stroke-width="1.2" stroke-linecap="round" stroke-linejoin="round" ><path d="M-4.6 -.9 0 -5.3 4.6 -.9V4.2a1 1 0 0 1-1 1h-7.2a1 1 0 0 1-1-1z"/><path d="M-1.6 5V1.7h3.2V5"/></svg><span class="t" style="left:63.10px;top:12.30px;font-size:11.76px;color:rgba(204,204,220,0.65);letter-spacing:-0.461px;">Home</span><svg class="ic" style="left:6.80px;top:34.00px" width="16" height="16" viewBox="-8 -8 16 16" fill="none" stroke="#c6c7d4" stroke-width="1.4" stroke-linecap="round" stroke-linejoin="round" ><path d="M-1.050 -1.9.950 0-1.050 1.9"/></svg><svg class="ic" style="left:34.10px;top:33.90px" width="16" height="16" viewBox="-8 -8 16 16" fill="none" stroke="rgba(204,204,220,0.65)" stroke-width="1.2" stroke-linecap="round" stroke-linejoin="round" ><path d="M-3.4 -4.5a.9.9 0 0 1 .9-.9h5a.9.9 0 0 1 .9.9v9.3L0 2.7-3.4 4.800z"/></svg><span class="t" style="left:63.10px;top:36.30px;font-size:11.76px;color:rgba(204,204,220,0.65);letter-spacing:-0.331px;">Bookmarks</span><svg class="ic" style="left:6.80px;top:58.00px" width="16" height="16" viewBox="-8 -8 16 16" fill="none" stroke="#c6c7d4" stroke-width="1.4" stroke-linecap="round" stroke-linejoin="round" ><path d="M-1.050 -1.9.950 0-1.050 1.9"/></svg><svg class="ic" style="left:34.10px;top:57.90px" width="16" height="16" viewBox="-8 -8 16 16" fill="none" stroke="rgba(204,204,220,0.65)" stroke-width="1.2" stroke-linecap="round" stroke-linejoin="round" ><path d="M0.10 -5.20L1.72 -1.92L5.33 -1.40L2.72 1.15L3.33 4.75L0.10 3.05L-3.13 4.75L-2.52 1.15L-5.13 -1.40L-1.52 -1.92Z"/></svg><span class="t" style="left:63.10px;top:60.30px;font-size:11.76px;color:rgba(204,204,220,0.65);letter-spacing:-0.221px;">Starred</span><div class="b" style="left:29.00px;top:78.00px;width:190.00px;height:24.00px;background:#22252b;border-radius:2px"></div><div class="b" style="left:29.00px;top:78.00px;width:3.00px;height:24.00px;background:linear-gradient(180deg,#f9832f 0%,#f55f3e 100%);border-radius:2px"></div><svg class="ic" style="left:6.80px;top:82.00px" width="16" height="16" viewBox="-8 -8 16 16" fill="none" stroke="#c6c7d4" stroke-width="1.4" stroke-linecap="round" stroke-linejoin="round" ><path d="M-1.050 -1.9.950 0-1.050 1.9"/></svg><svg class="ic" style="left:34.10px;top:81.90px" width="16" height="16" viewBox="-8 -8 16 16" fill="none" stroke="#d5d6e2" stroke-width="1.45" stroke-linecap="round" stroke-linejoin="round" ><rect x="-5.3" y="-5.3" width="4.3" height="4.3" rx=".8"/><rect x="1" y="-5.3" width="4.3" height="4.3" rx=".8"/><rect x="-5.3" y="1" width="4.3" height="4.3" rx=".8"/><rect x="1" y="1" width="4.3" height="4.3" rx=".8"/></svg><span class="t" style="left:63.10px;top:84.30px;font-size:11.76px;color:#ccccdc;letter-spacing:-0.306px;-webkit-text-stroke:0.2px #ccccdc;">Dashboards</span><svg class="ic" style="left:6.80px;top:106.00px" width="16" height="16" viewBox="-8 -8 16 16" fill="none" stroke="#c6c7d4" stroke-width="1.4" stroke-linecap="round" stroke-linejoin="round" ><path d="M-1.050 -1.9.950 0-1.050 1.9"/></svg><svg class="ic" style="left:34.10px;top:105.90px" width="16" height="16" viewBox="-8 -8 16 16" fill="none" stroke="rgba(204,204,220,0.65)" stroke-width="1.2" stroke-linecap="round" stroke-linejoin="round" ><circle cx="0" cy="0" r="5.3"/><path d="M2.3 -2.3.7.7-2.3 2.3-.7-.700z"/></svg><span class="t" style="left:63.10px;top:108.30px;font-size:11.76px;color:rgba(204,204,220,0.65);letter-spacing:-0.321px;">Explore</span><svg class="ic" style="left:6.90px;top:129.90px" width="16" height="16" viewBox="-8 -8 16 16" fill="none" stroke="#c6c7d4" stroke-width="1.4" stroke-linecap="round" stroke-linejoin="round" ><path d="M-2.3 -1.150 0 1.150 2.3 -1.150"/></svg><svg class="ic" style="left:34.10px;top:129.90px" width="16" height="16" viewBox="-8 -8 16 16" fill="none" stroke="rgba(204,204,220,0.65)" stroke-width="1.2" stroke-linecap="round" stroke-linejoin="round" ><path d="M-3.2 1.600v-2.900a3.2 3.2 0 0 1 6.4 0v2.9"/><path d="M0 -5.400v.8"/><rect x="-4.3" y="1.6" width="8.6" height="1.7" rx=".85"/><path d="M-1.5 4.300a1.5 1.5 0 0 0 3 0"/></svg><span class="t" style="left:63.10px;top:132.30px;font-size:11.76px;color:rgba(204,204,220,0.65);letter-spacing:-0.068px;">Alerting</span><span class="t" style="left:63.10px;top:156.30px;font-size:11.76px;color:rgba(204,204,220,0.65);letter-spacing:-0.119px;">Alert rules</span><span class="t" style="left:63.10px;top:180.30px;font-size:11.76px;color:rgba(204,204,220,0.65);letter-spacing:-0.109px;">Contact points</span><span class="t" style="left:63.10px;top:204.30px;font-size:11.76px;color:rgba(204,204,220,0.65);letter-spacing:-0.028px;">Notification policies</span><span class="t" style="left:63.10px;top:228.30px;font-size:11.76px;color:rgba(204,204,220,0.65);letter-spacing:-0.278px;">Silences</span><span class="t" style="left:63.10px;top:252.30px;font-size:11.76px;color:rgba(204,204,220,0.65);letter-spacing:-0.026px;">Active notifications</span><span class="t" style="left:63.10px;top:276.30px;font-size:11.76px;color:rgba(204,204,220,0.65);letter-spacing:-0.209px;">Settings</span><svg class="ic" style="left:6.90px;top:297.90px" width="16" height="16" viewBox="-8 -8 16 16" fill="none" stroke="#c6c7d4" stroke-width="1.4" stroke-linecap="round" stroke-linejoin="round" ><path d="M-2.3 -1.150 0 1.150 2.3 -1.150"/></svg><svg class="ic" style="left:34.10px;top:297.90px" width="16" height="16" viewBox="-8 -8 16 16" fill="none" stroke="rgba(204,204,220,0.65)" stroke-width="1.2" stroke-linecap="round" stroke-linejoin="round" ><circle cx="-1.4" cy="-1.9" r="3.9"/><circle cx="1.5" cy="1" r="4.1"/><path d="M-1.2 1.3 1.3 -2.100M-.2 2.3 2.3 -1.1"/></svg><span class="t" style="left:63.10px;top:300.30px;font-size:11.76px;color:rgba(204,204,220,0.65);letter-spacing:-0.175px;">Connections</span><span class="t" style="left:63.10px;top:324.30px;font-size:11.76px;color:rgba(204,204,220,0.65);letter-spacing:-0.124px;">Add new connection</span><span class="t" style="left:63.10px;top:348.30px;font-size:11.76px;color:rgba(204,204,220,0.65);letter-spacing:-0.253px;">Data sources</span><svg class="ic" style="left:6.80px;top:370.00px" width="16" height="16" viewBox="-8 -8 16 16" fill="none" stroke="#c6c7d4" stroke-width="1.4" stroke-linecap="round" stroke-linejoin="round" ><path d="M-1.050 -1.9.950 0-1.050 1.9"/></svg><svg class="ic" style="left:34.10px;top:369.90px" width="16" height="16" viewBox="-8 -8 16 16" fill="none" stroke="rgba(204,204,220,0.65)" stroke-width="1.2" stroke-linecap="round" stroke-linejoin="round" ><circle cx="0" cy="0" r="1.9"/><path d="M4.14 -1.17L5.44 -0.83L5.44 0.83L4.14 1.17L3.76 2.10L4.43 3.26L3.26 4.43L2.10 3.76L1.17 4.14L0.83 5.44L-0.83 5.44L-1.17 4.14L-2.10 3.76L-3.26 4.43L-4.43 3.26L-3.76 2.10L-4.14 1.17L-5.44 0.83L-5.44 -0.83L-4.14 -1.17L-3.76 -2.10L-4.43 -3.26L-3.26 -4.43L-2.10 -3.76L-1.17 -4.14L-0.83 -5.44L0.83 -5.44L1.17 -4.14L2.10 -3.76L3.26 -4.43L4.43 -3.26L3.76 -2.10Z"/></svg><span class="t" style="left:63.10px;top:372.30px;font-size:11.76px;color:rgba(204,204,220,0.65);letter-spacing:-0.118px;">Administration</span><svg class="ic" style="left:201.90px;top:9.90px" width="16" height="16" viewBox="-8 -8 16 16" fill="none" stroke="#d8d9e6" stroke-width="1.3" stroke-linecap="round" stroke-linejoin="round" ><rect x="-4.8" y="-4.7" width="9.6" height="9.4" rx=".4"/><path d="M-1.8 -4.700v9.4"/></svg></nav><header class="topbar"><svg class="ic" style="left:13px;top:7px" width="16" height="12" viewBox="0 0 16 12" stroke="#d2d3e0" stroke-width="1.25" stroke-linecap="round"><path d="M1.3 1.7h13.400M1.3 5.9h13.400M1.3 10.1h13.400"/></svg><span class="t" style="left:42.10px;top:6.30px;font-size:11.76px;color:#ccccdc;letter-spacing:-0.411px;">Home</span><svg class="ic" style="left:72.80px;top:4.70px" width="16" height="16" viewBox="-8 -8 16 16" fill="none" stroke="rgba(204,204,220,0.65)" stroke-width="1.3" stroke-linecap="round" stroke-linejoin="round" ><path d="M-1.050 -1.9.950 0-1.050 1.9"/></svg><span class="t" style="left:90.00px;top:6.30px;font-size:11.76px;color:#ccccdc;letter-spacing:-0.316px;">Dashboards</span><svg class="ic" style="left:151.80px;top:4.70px" width="16" height="16" viewBox="-8 -8 16 16" fill="none" stroke="rgba(204,204,220,0.65)" stroke-width="1.3" stroke-linecap="round" stroke-linejoin="round" ><path d="M-1.050 -1.9.950 0-1.050 1.9"/></svg><span class="t" style="left:169.00px;top:6.30px;font-size:11.76px;color:rgba(204,204,220,0.65);letter-spacing:-0.313px;">Dashboard node1-gan</span><svg class="ic" style="left:1721.60px;top:4.50px" width="16" height="16" viewBox="-8 -8 16 16" fill="none" stroke="rgba(204,204,220,0.65)" stroke-width="1.2" stroke-linecap="round" stroke-linejoin="round" ><path d="M0.10 -5.20L1.72 -1.92L5.33 -1.40L2.72 1.15L3.33 4.75L0.10 3.05L-3.13 4.75L-2.52 1.15L-5.13 -1.40L-1.52 -1.92Z"/></svg><div class="b" style="left:1756.00px;top:4.00px;width:1.00px;height:18.00px;background:rgba(204,204,220,0.12)"></div><div class="b" style="left:1766.00px;top:4.00px;width:38.00px;height:18.00px;border:1px solid #6294f5;border-radius:2px;background:#111217"></div><span class="t" style="left:1771.90px;top:7.73px;font-size:10.08px;color:#6e9fff;letter-spacing:-0.321px;-webkit-text-stroke:0.4px #6e9fff;will-change:transform;transform:scaleY(.875);transform-origin:0 8.27px;">Share</span><div class="b" style="left:1816.00px;top:4.00px;width:29.00px;height:18.00px;background:#3d71d9;border-radius:2px"></div><span class="t" style="left:1821.60px;top:7.73px;font-size:10.08px;color:#ffffff;letter-spacing:-0.019px;-webkit-text-stroke:0.3px #fff;will-change:transform;transform:scaleY(.875);transform-origin:0 8.27px;">Edit</span><svg class="ic" style="left:1856.70px;top:4.80px" width="16" height="16" viewBox="-8 -8 16 16" fill="none" stroke="rgba(204,204,220,0.65)" stroke-width="1.2" stroke-linecap="round" stroke-linejoin="round" ><rect x="-5.2" y="-5.2" width="10.4" height="8.5" rx="1.2"/><path d="M-5.2 1h10.400M-2.6 3.300v1.900h5.200v-1.9"/></svg><div class="b" style="left:1881.00px;top:4.00px;width:1.00px;height:18.00px;background:rgba(204,204,220,0.12)"></div><svg class="ic" style="left:1892.90px;top:4.90px" width="16" height="16" viewBox="-8 -8 16 16" fill="none" stroke="#b4b5c4" stroke-width="1.4" stroke-linecap="round" stroke-linejoin="round" ><path d="M-3.7 -1.7 0 1.7 3.7 -1.7"/></svg></header><div class="vscroll"><svg class="ic" style="left:0;top:0" width="15" height="1033" viewBox="0 0 15 1033"><path d="M2.6 7.9 7.4 .7 12.2 7.9z" fill="#a6a6a6"/><path d="M2.6 1021h9.6L7.4 1028z" fill="#a6a6a6"/><rect x="4" y="139" width="7" height="201" rx="3.5" fill="#9b9b9b"/></svg></div><div class="edge"></div></body></html>
